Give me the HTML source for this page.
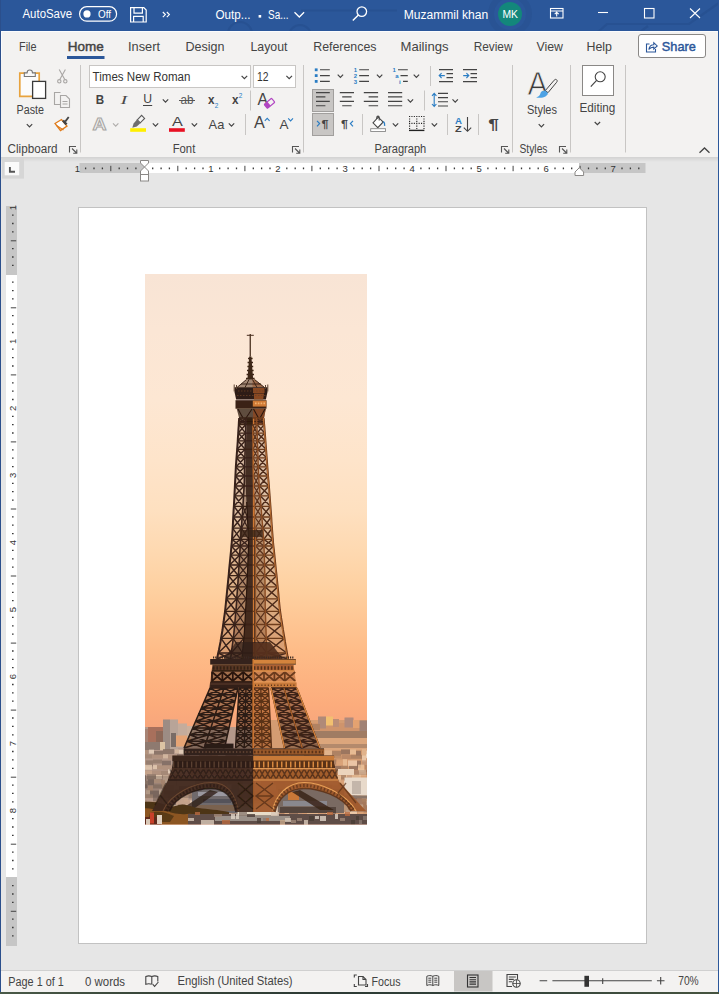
<!DOCTYPE html>
<html lang="en">
<head>
<meta charset="utf-8">
<title>Output - Word</title>
<style>
html,body{margin:0;padding:0;}
body{width:719px;height:994px;overflow:hidden;position:relative;background:#e6e6e6;font-family:"Liberation Sans",sans-serif;}
.abs{position:absolute;}
#titlebar{left:0;top:0;width:719px;height:31px;background:#2b579a;}
#tabs{left:1px;top:31px;width:717px;height:29px;background:#f3f2f1;border-top:1px solid #fbfcfd;border-left:1px solid #f9fbfd;box-sizing:border-box;}
#ribbon{left:1px;top:60px;width:717px;height:97px;background:#f3f2f1;}
#ribshadow{left:1px;top:157px;width:717px;height:5px;background:linear-gradient(#d2d2d2,#e6e6e6);}
#docarea{left:1px;top:162px;width:717px;height:808px;background:#e6e6e6;}
#page{left:78px;top:207px;width:569px;height:737px;background:#fff;border:1px solid #c2c2c2;box-sizing:border-box;}
#status{left:1px;top:970px;width:717px;height:21.5px;background:#f3f2f1;border-top:1px solid #d0d0d0;box-sizing:border-box;}
#bottomstrip{left:0;top:991.5px;width:719px;height:2.5px;background:linear-gradient(90deg,#4a5a48,#39473a 20%,#2c3a34 45%,#34443c 70%,#46543f);}
#lborder{left:0;top:0;width:1px;height:992px;background:#2b4f8c;}
#rborder{left:718px;top:0;width:1px;height:992px;background:#2b579a;}
svg{position:absolute;left:0;top:0;}
text{font-family:"Liberation Sans",sans-serif;}
</style>
</head>
<body>
<div id="titlebar" class="abs"></div>
<div id="tabs" class="abs"></div>
<div id="ribbon" class="abs"></div>
<div id="ribshadow" class="abs"></div>
<div id="docarea" class="abs"></div>
<div id="page" class="abs"></div>
<div id="status" class="abs"></div>
<div id="bottomstrip" class="abs"></div>
<div id="lborder" class="abs"></div>
<div id="rborder" class="abs"></div>

<!-- TITLEBAR + TABS -->
<svg id="s-title" width="719" height="62" viewBox="0 0 719 62">
<clipPath id="tbc"><rect x="1" y="0" width="717" height="30.7"/></clipPath>
<g fill="none" stroke="#244c8a" stroke-opacity=".5" stroke-width="2.2" clip-path="url(#tbc)">
<circle cx="240" cy="34" r="12"/><circle cx="300" cy="36" r="11"/>
<path d="M301 10.500h96"/>
<circle cx="510" cy="14" r="19" stroke-width="6" stroke-opacity=".35"/>
<path d="M598 32l9-8h82l30-21M640 32l8-6"/>
</g>
<g fill="#fff" font-size="12.5">
<text x="22.5" y="18" textLength="49.5" lengthAdjust="spacingAndGlyphs">AutoSave</text>
<text x="98" y="17.6" font-size="11" textLength="13" lengthAdjust="spacingAndGlyphs">Off</text>
<text x="215.5" y="19" textLength="35" lengthAdjust="spacingAndGlyphs">Outp...</text>
<text x="268" y="19" textLength="20.5" lengthAdjust="spacingAndGlyphs">Sa...</text>
<text x="403.7" y="19" textLength="84.5" lengthAdjust="spacingAndGlyphs">Muzammil khan</text>
</g>
<!-- toggle -->
<rect x="79.6" y="6.6" width="37" height="14.6" rx="7.3" fill="none" stroke="#fff" stroke-width="1.2"/>
<circle cx="87" cy="13.9" r="3.6" fill="#fff"/>
<!-- save icon -->
<g fill="none" stroke="#fff" stroke-width="1.2">
<path d="M130.6 7.6h13.2l2.4 2.4v12h-15.6z"/>
<path d="M134 7.6v5.6h8.4V7.6"/>
<path d="M133.6 22v-5.6h9.6V22"/>
</g>
<!-- >> -->
<path d="M162.8 12l2.6 2.6-2.6 2.6M166.8 12l2.6 2.6-2.6 2.6" fill="none" stroke="#fff" stroke-width="1.1"/>
<rect x="258.6" y="15" width="2.6" height="2.6" fill="#fff"/>
<path d="M294.5 12.2l4.8 4.8 4.8-4.8" fill="none" stroke="#fff" stroke-width="1.3"/>
<!-- search -->
<circle cx="361.8" cy="11.6" r="4.8" fill="none" stroke="#fff" stroke-width="1.3"/>
<path d="M358.4 15l-5.6 5.6" stroke="#fff" stroke-width="1.4"/>
<!-- avatar -->
<circle cx="510" cy="14" r="12" fill="#13877b"/>
<text x="502.5" y="18" font-size="11.5" fill="#fff" textLength="15.5" lengthAdjust="spacingAndGlyphs">MK</text>
<!-- ribbon display -->
<g fill="none" stroke="#fff" stroke-width="1.1">
<rect x="550.5" y="8.5" width="12.5" height="9.5"/>
<path d="M550.5 11h12.5M556.7 16.6v-4M554.7 14.2l2-2 2 2"/>
</g>
<path d="M598 12.5h10" stroke="#fff" stroke-width="1.1"/>
<rect x="644.5" y="8.5" width="9.5" height="9.5" fill="none" stroke="#fff" stroke-width="1.1"/>
<path d="M690 8.5l10 9.5M700 8.5l-10 9.5" stroke="#fff" stroke-width="1.1"/>
<!-- tabs -->
<g fill="#444" font-size="12.8">
<text x="19" y="50.8" textLength="17.5" lengthAdjust="spacingAndGlyphs">File</text>
<text x="67.8" y="50.8" fill="#444" stroke="#444" stroke-width=".45" textLength="36" lengthAdjust="spacingAndGlyphs">Home</text>
<text x="128" y="50.8" textLength="32" lengthAdjust="spacingAndGlyphs">Insert</text>
<text x="185.5" y="50.8" textLength="39" lengthAdjust="spacingAndGlyphs">Design</text>
<text x="250.5" y="50.8" textLength="37" lengthAdjust="spacingAndGlyphs">Layout</text>
<text x="313.2" y="50.8" textLength="63.3" lengthAdjust="spacingAndGlyphs">References</text>
<text x="400.5" y="50.8" textLength="48" lengthAdjust="spacingAndGlyphs">Mailings</text>
<text x="473.7" y="50.8" textLength="38.8" lengthAdjust="spacingAndGlyphs">Review</text>
<text x="536.5" y="50.8" textLength="26.5" lengthAdjust="spacingAndGlyphs">View</text>
<text x="586.5" y="50.8" textLength="25.5" lengthAdjust="spacingAndGlyphs">Help</text>
</g>
<rect x="67" y="56" width="37.5" height="3" fill="#2b579a"/>
<!-- share -->
<rect x="638.5" y="34.5" width="67" height="23" rx="2.5" fill="#fff" stroke="#8a8886" stroke-width="1"/>
<text x="661.8" y="50.8" font-size="12.8" fill="#2b579a" stroke="#2b579a" stroke-width=".45" textLength="34" lengthAdjust="spacingAndGlyphs">Share</text>
<g fill="none" stroke="#2b579a" stroke-width="1.1">
<path d="M649.5 44h-3v8h9v-3"/>
<path d="M648.8 49.5c.6-3.2 2.6-4.8 5-4.8v-2l3.4 3.2-3.4 3.2v-2c-2 0-3.6.6-5 2.4z"/>
</g>
</svg>

<svg id="s-ribbon" width="719" height="162" viewBox="0 0 719 162">
<!-- group separators -->
<g stroke="#c8c6c4" stroke-width="1">
<path d="M80.5 65v87.5M303.5 65v87.5M512.5 65v87.5M570.5 65v87.5M625.5 65v87.5"/>
<path d="M250.5 90.5v20M245.5 114v21M424.5 90.5v20M430.5 66v20M362.5 114v21M447.5 114v21M478.5 114v21"/>
</g>
<!-- group labels -->
<g fill="#444" font-size="12">
<text x="7.6" y="152.6" textLength="50" lengthAdjust="spacingAndGlyphs">Clipboard</text>
<text x="172.7" y="152.6" textLength="22.6" lengthAdjust="spacingAndGlyphs">Font</text>
<text x="374.5" y="152.6" textLength="51.7" lengthAdjust="spacingAndGlyphs">Paragraph</text>
<text x="519.5" y="152.6" textLength="28" lengthAdjust="spacingAndGlyphs">Styles</text>
</g>
<!-- dialog launchers -->
<g fill="none" stroke="#555" stroke-width="1.100">
<path d="M69.5 152.5v-6h6.5M72 148.5l4.5 4.5M76.8 149.6v3.6h-3.6"/>
<path d="M292.5 152.5v-6h6.5M295 148.5l4.500 4.500M299.800 149.600v3.600h-3.600"/>
<path d="M501.500 152.500v-6h6.500M504 148.500l4.500 4.500M508.800 149.600v3.600h-3.600"/>
<path d="M559.500 152.500v-6h6.500M562 148.500l4.500 4.500M566.800 149.600v3.600h-3.600"/>
</g>
<!-- collapse caret -->
<path d="M699.500 152.800l5-4.800 5 4.800" fill="none" stroke="#444" stroke-width="1.3"/>

<!-- CLIPBOARD: paste -->
<g fill="none">
<rect x="19.300" y="73.200" width="20.400" height="23.400" fill="#fbfbfb"/>
<path d="M25 73.200h-5.200v23.200h12.400" stroke="#e8a33e" stroke-width="1.700"/>
<path d="M34.500 73.200h4.700v8" stroke="#e8a33e" stroke-width="1.700"/>
<path d="M24.300 76.500v-3.600h2.800c0-3.800 5.400-3.800 5.400 0h2.800v3.600z" fill="#f8f8f8" stroke="#777" stroke-width="1.100"/>
<rect x="32.600" y="81.400" width="13" height="17" fill="#fff" stroke="#3a3a3a" stroke-width="1.300"/>
</g>
<text x="16.600" y="113.500" font-size="12.500" fill="#444" textLength="27.400" lengthAdjust="spacingAndGlyphs">Paste</text>
<path d="M26.800 124.200l2.700 2.700 2.700-2.700" fill="none" stroke="#444" stroke-width="1.200"/>
<!-- scissors (disabled grey) -->
<g fill="none" stroke="#a8a6a4" stroke-width="1.100">
<path d="M59.200 69.500l5.600 10M65.400 69.500l-5.600 10"/>
<circle cx="59.300" cy="81.300" r="1.700"/><circle cx="65.300" cy="81.300" r="1.700"/>
</g>
<!-- copy (disabled) -->
<g fill="none" stroke="#a8a6a4" stroke-width="1.100">
<path d="M60.500 104.500h-6v-12h6"/>
<path d="M60.500 95.500h5.500l3.500 3.500v8.500h-9z"/>
<path d="M62.500 101.500h5M62.500 104h5"/>
</g>
<!-- format painter -->
<g>
<path d="M55 123.500l6.500-4 5.500 6.500-6.500 4.500z" fill="#fff" stroke="#e07b1a" stroke-width="1.300"/>
<path d="M56.500 125.500l7 4.500" stroke="#e07b1a" stroke-width="1.100"/>
<path d="M63 120.500l3.500 4" stroke="#444" stroke-width="2.600"/>
<path d="M65.200 121.600l3.500-4.600" stroke="#444" stroke-width="1.800"/>
</g>

<!-- FONT boxes -->
<rect x="89.500" y="65.500" width="161" height="22" fill="#fff" stroke="#c8c6c4"/>
<rect x="253.500" y="65.500" width="42" height="22" fill="#fff" stroke="#c8c6c4"/>
<text x="92.600" y="81" font-size="12.500" fill="#333" textLength="97.800" lengthAdjust="spacingAndGlyphs">Times New Roman</text>
<text x="256.900" y="81" font-size="12.500" fill="#333" textLength="11.500" lengthAdjust="spacingAndGlyphs">12</text>
<g fill="none" stroke="#444" stroke-width="1.200">
<path d="M241.600 75.800l2.800 2.800 2.800-2.800"/>
<path d="M286.400 75.800l2.800 2.800 2.800-2.800"/>
<!-- small chevrons -->
<path d="M162.800 99.400l2.700 2.700 2.700-2.700"/>
<path d="M152.800 123.400l2.700 2.700 2.700-2.700"/>
<path d="M191.700 123.400l2.700 2.700 2.700-2.700"/>
<path d="M228.800 123.400l2.700 2.700 2.700-2.700"/>
</g>
<path d="M113 123.400l2.700 2.700 2.700-2.700" fill="none" stroke="#b0aeac" stroke-width="1.200"/>
<!-- B I U ab x2 x2 -->
<text x="95.800" y="103.700" font-size="12.600" font-weight="bold" fill="#444" textLength="8.400" lengthAdjust="spacingAndGlyphs">B</text>
<text x="120.600" y="103.700" font-size="13.500" font-style="italic" fill="#4a4a4a" style="font-family:'Liberation Serif',serif" textLength="6.800" lengthAdjust="spacingAndGlyphs">I</text>
<text x="143.200" y="103.400" font-size="12.500" fill="#444" textLength="8.800" lengthAdjust="spacingAndGlyphs">U</text>
<path d="M143 105.500h9.200" stroke="#444" stroke-width="1"/>
<text x="180.500" y="104" font-size="12.500" fill="#555" textLength="13" lengthAdjust="spacingAndGlyphs">ab</text>
<path d="M179 100.500h16" stroke="#555" stroke-width="1"/>
<text x="208" y="104" font-size="12.500" font-weight="bold" fill="#444" textLength="6.500" lengthAdjust="spacingAndGlyphs">x</text>
<text x="214.700" y="107.700" font-size="7" fill="#2a7dc4" textLength="3.600" lengthAdjust="spacingAndGlyphs">2</text>
<text x="232" y="104" font-size="12.500" font-weight="bold" fill="#444" textLength="6.500" lengthAdjust="spacingAndGlyphs">x</text>
<text x="238.800" y="97.600" font-size="7" fill="#2a7dc4" textLength="3.600" lengthAdjust="spacingAndGlyphs">2</text>
<!-- clear formatting -->
<text x="257.500" y="104.600" font-size="16.500" fill="#444" textLength="10.500" lengthAdjust="spacingAndGlyphs">A</text>
<g transform="rotate(-40 269.500 103.300)"><rect x="264.700" y="100.700" width="9.600" height="5.200" rx=".8" fill="#f3f2f1" stroke="#b146c2" stroke-width="1.200"/><rect x="264.700" y="100.700" width="4.200" height="5.200" fill="#b146c2"/></g>
<!-- text effects A (outlined grey) -->
<text x="92.600" y="129.600" font-size="17" font-weight="bold" fill="#f3f2f1" stroke="#a8a6a4" stroke-width="1" textLength="14" lengthAdjust="spacingAndGlyphs">A</text>
<!-- highlighter -->
<path d="M137.300 119.800L141.600 115.400L144.600 118.400L140.300 122.800Z" fill="#f6f6f6" stroke="#5a5a5a" stroke-width="1.100"/>
<path d="M137 119.600L140.600 123L136.800 126.600L132.300 127.800L133.600 123.400Z" fill="#6e6e6e"/>
<rect x="130.200" y="128.200" width="15.800" height="3.600" fill="#ffef00"/>
<!-- font color -->
<text x="172" y="126.400" font-size="13.500" fill="#444" textLength="10.800" lengthAdjust="spacingAndGlyphs">A</text>
<rect x="169" y="128.200" width="15.800" height="3.600" fill="#e81123"/>
<!-- Aa -->
<text x="208.600" y="128.500" font-size="12.800" fill="#444" textLength="15.700" lengthAdjust="spacingAndGlyphs">Aa</text>
<!-- grow / shrink -->
<text x="254" y="128.300" font-size="16" fill="#444" textLength="10.800" lengthAdjust="spacingAndGlyphs">A</text>
<path d="M264.800 120.800l2.400-2.500 2.400 2.500" fill="none" stroke="#2a7dc4" stroke-width="1.100"/>
<text x="279.500" y="128.500" font-size="12.800" fill="#444" textLength="9" lengthAdjust="spacingAndGlyphs">A</text>
<path d="M288.200 118.400l2.400 2.500 2.400-2.500" fill="none" stroke="#2a7dc4" stroke-width="1.100"/>
<!-- PARAGRAPH row1: bullets -->
<g fill="#2a7dc4">
<rect x="314.800" y="68.400" width="2.800" height="2.800"/><rect x="314.800" y="74.200" width="2.800" height="2.800"/><rect x="314.800" y="80" width="2.800" height="2.800"/>
</g>
<g stroke="#444" stroke-width="1.100" fill="none">
<path d="M320 69.800h9.800M320 75.600h9.800M320 81.400h9.800"/>
<path d="M359.200 69.800h9.800M359.200 75.600h9.800M359.200 81.400h9.800"/>
<path d="M398 69.800h9.800M400.500 75.600h7.300M403 81.400h4.800"/>
</g>
<g fill="#2a7dc4" font-size="6" font-weight="bold">
<text x="353.800" y="72">1</text><text x="353.800" y="77.900">2</text><text x="353.800" y="83.800">3</text>
<text x="392.600" y="72">1</text><text x="395.300" y="78">a</text><text x="399" y="84">i</text>
</g>
<g fill="none" stroke="#444" stroke-width="1.200">
<path d="M337.700 74.600l2.700 2.700 2.700-2.700"/>
<path d="M376.900 74.600l2.700 2.700 2.700-2.700"/>
<path d="M413.700 74.600l2.700 2.700 2.700-2.700"/>
<path d="M407.700 99.400l2.700 2.700 2.700-2.700"/>
<path d="M452.500 99.400l2.700 2.700 2.700-2.700"/>
<path d="M392.800 123.400l2.700 2.700 2.700-2.700"/>
<path d="M431.700 123.400l2.700 2.700 2.700-2.700"/>
</g>
<!-- decrease / increase indent -->
<g stroke="#444" stroke-width="1.100" fill="none">
<path d="M439 69.600h14M446.500 73.600h6.500M446.500 77.600h6.500M439 81.600h14"/>
<path d="M463 69.600h14M470.500 73.600h6.500M470.500 77.600h6.500M463 81.600h14"/>
</g>
<g stroke="#2a7dc4" stroke-width="1.100" fill="none">
<path d="M444.800 75.600h-5.600M441.600 73.200l-2.400 2.400 2.400 2.400"/>
<path d="M463.200 75.600h5.600M466.400 73.200l2.400 2.400-2.400 2.400"/>
</g>
<!-- row2: align -->
<rect x="312.500" y="89.500" width="21" height="22" fill="#c8c6c4" stroke="#a19f9d"/>
<g stroke="#444" stroke-width="1.100" fill="none">
<path d="M316 92.600h13.800M316 96.900h9.400M316 101.400h13.800M316 105.700h9.400"/>
<path d="M339.800 92.600h14.200M342.200 96.900h9.400M339.800 101.400h14.200M342.200 105.700h9.400"/>
<path d="M363.800 92.600h14.300M368.600 96.900h9.500M363.800 101.400h14.300M368.600 105.700h9.500"/>
<path d="M388 92.600h14.200M388 96.900h14.200M388 101.400h14.200M388 105.700h14.200"/>
<!-- line spacing lines -->
<path d="M438 93.400h10M438 97.600h10M438 101.800h10M438 106h10"/>
</g>
<g stroke="#2a7dc4" stroke-width="1.100" fill="none">
<path d="M434.200 93.600v12.600M432 95.800l2.200-2.400 2.200 2.400M432 104l2.200 2.400 2.200-2.400"/>
</g>
<!-- row3: LTR / RTL -->
<rect x="312.500" y="113.500" width="21" height="22" fill="#c8c6c4" stroke="#a19f9d"/>
<path d="M317 120.800l2.600 2.800-2.600 2.800" fill="none" stroke="#2a7dc4" stroke-width="1.200"/>
<text x="321.600" y="128.400" font-size="11.500" font-weight="bold" fill="#444" textLength="7" lengthAdjust="spacingAndGlyphs">¶</text>
<text x="341" y="128.400" font-size="11.500" font-weight="bold" fill="#444" textLength="7" lengthAdjust="spacingAndGlyphs">¶</text>
<path d="M353 120.800l-2.600 2.800 2.600 2.800" fill="none" stroke="#2a7dc4" stroke-width="1.200"/>
<!-- shading bucket -->
<g fill="none" stroke="#444" stroke-width="1.100">
<path d="M373 122.800l5.200-5.600 5 4.800-5.400 5.600z" fill="#fff"/>
<path d="M376.800 119v-1.600c0-1.700 2.400-1.700 2.400 0v3"/>
</g>
<path d="M383.400 121.400c1.400 1.400 1.600 2.800 1.200 4.400" fill="none" stroke="#2a7dc4" stroke-width="1.400"/>
<rect x="370.700" y="128.700" width="14.800" height="2.800" fill="#fff" stroke="#888" stroke-width=".9"/>
<!-- borders -->
<g stroke="#222" stroke-width="1.100" stroke-dasharray="1.100 1.300" fill="none">
<path d="M409 116.500h15.600M409 123.400h15.600M409.600 116v14M416.800 116v14M424 116v14"/>
</g>
<path d="M409 130.400h15.400" stroke="#222" stroke-width="1.400"/>
<!-- sort -->
<text x="455" y="123.800" font-size="9.500" font-weight="bold" fill="#2a7dc4" textLength="7" lengthAdjust="spacingAndGlyphs">A</text>
<text x="455" y="132.200" font-size="9.500" font-weight="bold" fill="#444" textLength="6.600" lengthAdjust="spacingAndGlyphs">Z</text>
<path d="M467.500 117v14.200M463.800 127.600l3.700 3.700 3.700-3.700" fill="none" stroke="#444" stroke-width="1.100"/>
<!-- pilcrow -->
<text x="488.300" y="129" font-size="14" font-weight="bold" fill="#444" textLength="10.600" lengthAdjust="spacingAndGlyphs">¶</text>
<!-- STYLES -->
<text x="527.600" y="95.200" font-size="33.500" fill="#3a3a3a" stroke="#f3f2f1" stroke-width=".8" textLength="20.400" lengthAdjust="spacingAndGlyphs">A</text>
<path d="M556.400 79.600c1 .7 1 1.600.2 2.700l-8.600 10.400-2.600-2.200 8.800-10.300c.8-.9 1.500-1 2.200-.6z" fill="#f3f2f1" stroke="#444" stroke-width="1"/>
<path d="M545.200 90.600l2.700 2.300c-.6 3.400-4.600 5.800-11.800 4.600 2.600-.8 3.600-1.700 4.200-3.700.6-2.300 2.600-3.500 4.900-3.200z" fill="#4da2e4"/>
<text x="527" y="113.600" font-size="12.500" fill="#444" textLength="30" lengthAdjust="spacingAndGlyphs">Styles</text>
<path d="M538.700 124.200l2.700 2.700 2.700-2.700" fill="none" stroke="#444" stroke-width="1.200"/>
<!-- EDITING -->
<rect x="582.500" y="65.500" width="31" height="30" fill="#fff" stroke="#8a8886"/>
<circle cx="600.200" cy="76.800" r="5" fill="none" stroke="#444" stroke-width="1.100"/>
<path d="M596.600 80.400l-5.800 6.200" stroke="#444" stroke-width="1.200"/>
<text x="579.500" y="112" font-size="12.500" fill="#444" textLength="35.800" lengthAdjust="spacingAndGlyphs">Editing</text>
<path d="M594.700 122l2.700 2.700 2.700-2.700" fill="none" stroke="#444" stroke-width="1.200"/>

</svg>

<!--RIBBON_END-->
<svg id="s-ruler" width="719" height="994" viewBox="0 0 719 994" style="pointer-events:none">
<rect x="2" y="158" width="22" height="20.600" fill="#d6d6d6"/><rect x="4.700" y="162" width="14.500" height="13.300" fill="#fafafa"/>
<path d="M9.900 167v4.800h5.100" fill="none" stroke="#555" stroke-width="1.900"/>
<rect x="79.500" y="163" width="566" height="10" fill="#c6c6c6"/>
<rect x="144.300" y="163" width="434.700" height="10" fill="#fff"/>
<path d="M85.6 167.600v1.600M94.0 167.600v1.600M102.4 167.600v1.600M119.2 167.600v1.600M127.5 167.600v1.600M135.9 167.600v1.600M152.7 167.600v1.600M161.1 167.600v1.600M169.4 167.600v1.600M186.2 167.600v1.600M194.6 167.600v1.600M203.0 167.600v1.600M219.7 167.600v1.600M228.1 167.600v1.600M236.5 167.600v1.600M253.3 167.600v1.600M261.6 167.600v1.600M270.0 167.600v1.600M286.8 167.600v1.600M295.2 167.600v1.600M303.5 167.600v1.600M320.3 167.600v1.600M328.7 167.600v1.600M337.1 167.600v1.600M353.8 167.600v1.600M362.2 167.600v1.600M370.6 167.600v1.600M387.4 167.600v1.600M395.7 167.600v1.600M404.1 167.600v1.600M420.9 167.600v1.600M429.3 167.600v1.600M437.6 167.600v1.600M454.4 167.600v1.600M462.8 167.600v1.600M471.2 167.600v1.600M487.9 167.600v1.600M496.3 167.600v1.600M504.7 167.600v1.600M521.5 167.600v1.600M529.8 167.600v1.600M538.2 167.600v1.600M555.0 167.600v1.600M563.4 167.600v1.600M571.7 167.600v1.600M588.5 167.600v1.600M596.9 167.600v1.600M605.3 167.600v1.600M622.0 167.600v1.600M630.4 167.600v1.600M638.8 167.600v1.600" stroke="#3a3a3a" stroke-width="1.300" fill="none"/>
<path d="M110.8 165.800v5.400M177.8 165.800v5.400M244.9 165.800v5.400M311.9 165.800v5.400M379.0 165.800v5.400M446.0 165.800v5.400M513.1 165.800v5.400M580.1 165.800v5.400" stroke="#444" stroke-width="1" fill="none"/>
<g font-size="9.500" fill="#333" text-anchor="middle">
<text x="77.300" y="171.600">1</text>
<text x="211.0" y="171.600">1</text>
<text x="278.0" y="171.600">2</text>
<text x="345.1" y="171.600">3</text>
<text x="412.1" y="171.600">4</text>
<text x="479.2" y="171.600">5</text>
<text x="546.2" y="171.600">6</text>
<text x="613.2" y="171.600">7</text>
</g>
<g fill="#fff" stroke="#8a8886" stroke-width="1">
<path d="M140.500 160.500h8v2.500l-4 4-4-4z"/>
<path d="M140.500 174.500v-3.500l4-4 4 4v3.500z"/>
<rect x="140.500" y="174.500" width="8" height="6.500"/>
<path d="M575 175.500v-3.500l4.300-4.300 4.300 4.300v3.500z"/>
</g>
<rect x="6" y="206" width="11" height="740" fill="#c6c6c6"/>
<rect x="6" y="275" width="11" height="602" fill="#fff"/>
<path d="M12 215.1h1.600M12 223.5h1.600M12 231.9h1.600M12 248.7h1.600M12 257.0h1.600M12 265.4h1.600M12 282.2h1.600M12 290.6h1.600M12 298.9h1.600M12 315.7h1.600M12 324.1h1.600M12 332.5h1.600M12 349.2h1.600M12 357.6h1.600M12 366.0h1.600M12 382.8h1.600M12 391.1h1.600M12 399.5h1.600M12 416.3h1.600M12 424.7h1.600M12 433.0h1.600M12 449.8h1.600M12 458.2h1.600M12 466.6h1.600M12 483.3h1.600M12 491.7h1.600M12 500.1h1.600M12 516.9h1.600M12 525.2h1.600M12 533.6h1.600M12 550.4h1.600M12 558.8h1.600M12 567.1h1.600M12 583.9h1.600M12 592.3h1.600M12 600.7h1.600M12 617.4h1.600M12 625.8h1.600M12 634.2h1.600M12 651.0h1.600M12 659.3h1.600M12 667.7h1.600M12 684.5h1.600M12 692.9h1.600M12 701.2h1.600M12 718.0h1.600M12 726.4h1.600M12 734.8h1.600M12 751.5h1.600M12 759.9h1.600M12 768.3h1.600M12 785.1h1.600M12 793.4h1.600M12 801.8h1.600M12 818.6h1.600M12 827.0h1.600M12 835.3h1.600M12 852.1h1.600M12 860.5h1.600M12 868.9h1.600M12 885.6h1.600M12 894.0h1.600M12 902.4h1.600M12 919.2h1.600M12 927.5h1.600M12 935.9h1.600" stroke="#3a3a3a" stroke-width="1.300" fill="none"/>
<path d="M10.800 240.8h5.400M10.800 307.8h5.400M10.800 374.9h5.400M10.800 441.9h5.400M10.800 509.0h5.400M10.800 576.0h5.400M10.800 643.1h5.400M10.800 710.1h5.400M10.800 777.2h5.400M10.800 844.2h5.400M10.800 911.3h5.400" stroke="#444" stroke-width="1" fill="none"/>
<g font-size="9.500" fill="#333" text-anchor="middle">
<text transform="translate(16.200 207.600) rotate(-90)">1</text>
<text transform="translate(16.200 341.4) rotate(-90)">1</text>
<text transform="translate(16.200 408.4) rotate(-90)">2</text>
<text transform="translate(16.200 475.4) rotate(-90)">3</text>
<text transform="translate(16.200 542.5) rotate(-90)">4</text>
<text transform="translate(16.200 609.5) rotate(-90)">5</text>
<text transform="translate(16.200 676.6) rotate(-90)">6</text>
<text transform="translate(16.200 743.6) rotate(-90)">7</text>
<text transform="translate(16.200 810.7) rotate(-90)">8</text>
</g>
</svg>
<!--RULER_END-->
<!--PHOTO_START-->
<svg id="s-photo" width="719" height="994" viewBox="0 0 719 994" style="pointer-events:none">
<defs>
<linearGradient id="sky" x1="0" y1="274" x2="0" y2="740" gradientUnits="userSpaceOnUse">
<stop offset="0.0000" stop-color="#f8e4d5"/>
<stop offset="0.1202" stop-color="#fbe6d5"/>
<stop offset="0.2704" stop-color="#fde7d3"/>
<stop offset="0.3991" stop-color="#fee4ca"/>
<stop offset="0.5064" stop-color="#fee0c0"/>
<stop offset="0.5923" stop-color="#fed9b1"/>
<stop offset="0.6781" stop-color="#fed0a0"/>
<stop offset="0.7425" stop-color="#fec694"/>
<stop offset="0.8069" stop-color="#febc88"/>
<stop offset="0.8712" stop-color="#fdb381"/>
<stop offset="0.9249" stop-color="#fcac7c"/>
<stop offset="1.0000" stop-color="#f4a27c"/>
</linearGradient>
<linearGradient id="tw" x1="205" y1="0" x2="300" y2="0" gradientUnits="userSpaceOnUse">
<stop offset="0" stop-color="#3a2216"/><stop offset=".46" stop-color="#3e2517"/><stop offset=".54" stop-color="#8a4520"/><stop offset="1" stop-color="#a35626"/></linearGradient>
<linearGradient id="lr" x1="160" y1="0" x2="345" y2="0" gradientUnits="userSpaceOnUse">
<stop offset="0" stop-color="#4a3022"/><stop offset=".495" stop-color="#3a241a"/><stop offset=".505" stop-color="#b0642e"/><stop offset="1" stop-color="#c07436"/></linearGradient>
<clipPath id="pc"><rect x="145" y="274" width="222" height="550.600"/></clipPath>
<filter id="bl" filterUnits="userSpaceOnUse" x="120" y="260" width="280" height="590"><feGaussianBlur stdDeviation="0.45"/></filter>
<filter id="bl2" filterUnits="userSpaceOnUse" x="120" y="260" width="280" height="590"><feGaussianBlur stdDeviation="0.6"/></filter>
</defs>
<g clip-path="url(#pc)">
<rect x="135" y="264" width="242" height="571" fill="url(#sky)"/>
<g filter="url(#bl2)">
<rect x="135.0" y="727.0" width="120.0" height="110.0" fill="#b4988a"/>
<rect x="255.0" y="720.0" width="122.0" height="112.0" fill="#d49c72"/>
<rect x="135.0" y="729.0" width="14.0" height="14.0" fill="#a88474"/>
<rect x="148.0" y="727.0" width="15.0" height="18.0" fill="#a8705c"/>
<rect x="163.0" y="719.5" width="7.0" height="30.0" fill="#9c8c84"/>
<rect x="170.0" y="719.5" width="8.0" height="30.0" fill="#b8a498"/>
<rect x="156.0" y="731.0" width="7.0" height="12.0" fill="#8c6858"/>
<rect x="178.0" y="723.5" width="9.0" height="24.0" fill="#c4ac9c"/>
<rect x="171.0" y="733.0" width="5.0" height="14.0" fill="#7a6c66"/>
<rect x="176.0" y="735.5" width="15.0" height="11.0" fill="#e6a474"/>
<rect x="187.0" y="726.0" width="9.0" height="12.0" fill="#cbb09c"/>
<rect x="194.0" y="725.0" width="9.0" height="10.0" fill="#c0a694"/>
<rect x="135.0" y="742.0" width="28.0" height="8.0" fill="#8e7a70"/>
<rect x="160.0" y="742.0" width="5.0" height="8.0" fill="#dcc4a4"/>
<rect x="296.0" y="723.0" width="81.0" height="9.0" fill="#cf946c"/>
<rect x="318.0" y="716.5" width="8.0" height="12.0" fill="#b08a78"/>
<rect x="326.0" y="716.5" width="7.0" height="9.0" fill="#f2c070"/>
<rect x="333.0" y="719.0" width="6.0" height="8.0" fill="#bc8e76"/>
<rect x="344.5" y="717.5" width="9.0" height="10.0" fill="#b08a7c"/>
<rect x="353.0" y="720.0" width="7.0" height="8.0" fill="#e4a270"/>
<rect x="359.5" y="720.5" width="9.0" height="14.0" fill="#a08274"/>
<rect x="308.0" y="724.0" width="12.0" height="6.0" fill="#b08262"/>
<rect x="290.0" y="731.0" width="90.0" height="7.0" fill="#a07c64"/>
<rect x="290.0" y="738.0" width="90.0" height="12.0" fill="#dca67c"/>
<rect x="300.0" y="744.0" width="70.0" height="4.0" fill="#b48a6c"/>
<rect x="135.0" y="750.0" width="7.0" height="7.0" fill="#f0dcc6" fill-opacity="0.72"/>
<rect x="143.0" y="750.0" width="5.0" height="5.0" fill="#b09078" fill-opacity="0.72"/>
<rect x="149.0" y="749.6" width="5.0" height="4.0" fill="#f0dcc6" fill-opacity="0.72"/>
<rect x="154.0" y="751.0" width="9.0" height="4.0" fill="#7e6a5e" fill-opacity="0.72"/>
<rect x="163.0" y="749.0" width="11.0" height="5.0" fill="#7e6a5e" fill-opacity="0.72"/>
<rect x="175.0" y="749.4" width="4.0" height="4.0" fill="#dcc0a6" fill-opacity="0.72"/>
<rect x="179.0" y="749.7" width="9.0" height="4.0" fill="#f0dcc6" fill-opacity="0.72"/>
<rect x="189.0" y="749.6" width="5.0" height="5.0" fill="#c49a7a" fill-opacity="0.72"/>
<rect x="194.0" y="750.3" width="11.0" height="4.0" fill="#f0dcc6" fill-opacity="0.72"/>
<rect x="205.0" y="749.6" width="9.0" height="4.0" fill="#a08470" fill-opacity="0.72"/>
<rect x="214.0" y="749.1" width="9.0" height="6.0" fill="#dcc0a6" fill-opacity="0.72"/>
<rect x="223.0" y="749.8" width="7.0" height="4.0" fill="#a08470" fill-opacity="0.72"/>
<rect x="230.0" y="749.4" width="11.0" height="4.0" fill="#ecd2b8" fill-opacity="0.72"/>
<rect x="241.0" y="749.8" width="7.0" height="7.0" fill="#74625a" fill-opacity="0.72"/>
<rect x="249.0" y="749.5" width="11.0" height="5.0" fill="#c49a7a" fill-opacity="0.72"/>
<rect x="260.0" y="750.9" width="6.0" height="6.0" fill="#e6bc94" fill-opacity="0.72"/>
<rect x="266.0" y="749.0" width="5.0" height="5.0" fill="#c4906a" fill-opacity="0.72"/>
<rect x="271.0" y="749.4" width="7.0" height="5.0" fill="#c0967a" fill-opacity="0.72"/>
<rect x="279.0" y="750.3" width="5.0" height="5.0" fill="#866858" fill-opacity="0.72"/>
<rect x="284.0" y="749.0" width="7.0" height="7.0" fill="#f2d6b8" fill-opacity="0.72"/>
<rect x="292.0" y="749.4" width="6.0" height="4.0" fill="#f2d6b8" fill-opacity="0.72"/>
<rect x="299.0" y="751.0" width="11.0" height="4.0" fill="#e6bc94" fill-opacity="0.72"/>
<rect x="310.0" y="750.5" width="7.0" height="6.0" fill="#e6bc94" fill-opacity="0.72"/>
<rect x="317.0" y="749.1" width="6.0" height="7.0" fill="#c4906a" fill-opacity="0.72"/>
<rect x="323.0" y="750.2" width="9.0" height="5.0" fill="#e6bc94" fill-opacity="0.72"/>
<rect x="332.0" y="750.9" width="9.0" height="7.0" fill="#a0785e" fill-opacity="0.72"/>
<rect x="341.0" y="749.4" width="9.0" height="5.0" fill="#866858" fill-opacity="0.72"/>
<rect x="350.0" y="749.5" width="6.0" height="5.0" fill="#efc8a0" fill-opacity="0.72"/>
<rect x="356.0" y="750.8" width="5.0" height="5.0" fill="#866858" fill-opacity="0.72"/>
<rect x="362.0" y="749.2" width="4.0" height="7.0" fill="#e6bc94" fill-opacity="0.72"/>
<rect x="366.0" y="750.5" width="9.0" height="6.0" fill="#f2d6b8" fill-opacity="0.72"/>
<rect x="375.0" y="750.0" width="6.0" height="7.0" fill="#efc8a0" fill-opacity="0.72"/>
<rect x="135.0" y="754.5" width="5.0" height="4.0" fill="#8a7466" fill-opacity="0.72"/>
<rect x="141.0" y="754.4" width="11.0" height="4.0" fill="#a08470" fill-opacity="0.72"/>
<rect x="152.0" y="754.5" width="11.0" height="4.0" fill="#b0907c" fill-opacity="0.72"/>
<rect x="163.0" y="754.4" width="5.0" height="4.0" fill="#dcc0a6" fill-opacity="0.72"/>
<rect x="168.0" y="754.7" width="9.0" height="5.0" fill="#b0907c" fill-opacity="0.72"/>
<rect x="177.0" y="754.1" width="6.0" height="5.0" fill="#7e6a5e" fill-opacity="0.72"/>
<rect x="183.0" y="755.9" width="7.0" height="6.0" fill="#a08470" fill-opacity="0.72"/>
<rect x="190.0" y="754.1" width="9.0" height="4.0" fill="#f0dcc6" fill-opacity="0.72"/>
<rect x="199.0" y="754.2" width="6.0" height="5.0" fill="#b0907c" fill-opacity="0.72"/>
<rect x="206.0" y="755.6" width="6.0" height="4.0" fill="#8a7466" fill-opacity="0.72"/>
<rect x="212.0" y="754.9" width="6.0" height="4.0" fill="#c49a7a" fill-opacity="0.72"/>
<rect x="218.0" y="755.1" width="7.0" height="4.0" fill="#f0dcc6" fill-opacity="0.72"/>
<rect x="226.0" y="755.2" width="11.0" height="7.0" fill="#74625a" fill-opacity="0.72"/>
<rect x="238.0" y="755.3" width="4.0" height="4.0" fill="#b0907c" fill-opacity="0.72"/>
<rect x="242.0" y="755.9" width="7.0" height="6.0" fill="#74625a" fill-opacity="0.72"/>
<rect x="250.0" y="754.9" width="9.0" height="7.0" fill="#f6e6d4" fill-opacity="0.72"/>
<rect x="260.0" y="755.2" width="4.0" height="4.0" fill="#b08264" fill-opacity="0.72"/>
<rect x="264.0" y="755.0" width="4.0" height="5.0" fill="#c4906a" fill-opacity="0.72"/>
<rect x="269.0" y="755.8" width="11.0" height="7.0" fill="#b08264" fill-opacity="0.72"/>
<rect x="280.0" y="754.4" width="6.0" height="5.0" fill="#efc8a0" fill-opacity="0.72"/>
<rect x="286.0" y="755.8" width="6.0" height="7.0" fill="#f6e6d4" fill-opacity="0.72"/>
<rect x="292.0" y="755.3" width="7.0" height="6.0" fill="#f2d6b8" fill-opacity="0.72"/>
<rect x="299.0" y="755.2" width="5.0" height="7.0" fill="#f2d6b8" fill-opacity="0.72"/>
<rect x="304.0" y="755.0" width="5.0" height="5.0" fill="#a0785e" fill-opacity="0.72"/>
<rect x="309.0" y="755.6" width="11.0" height="4.0" fill="#b08264" fill-opacity="0.72"/>
<rect x="320.0" y="755.9" width="7.0" height="7.0" fill="#b08264" fill-opacity="0.72"/>
<rect x="327.0" y="755.4" width="7.0" height="7.0" fill="#dca67c" fill-opacity="0.72"/>
<rect x="335.0" y="755.7" width="7.0" height="6.0" fill="#c4906a" fill-opacity="0.72"/>
<rect x="342.0" y="755.1" width="9.0" height="4.0" fill="#b08264" fill-opacity="0.72"/>
<rect x="351.0" y="754.8" width="11.0" height="4.0" fill="#a0785e" fill-opacity="0.72"/>
<rect x="362.0" y="755.6" width="4.0" height="6.0" fill="#f2d6b8" fill-opacity="0.72"/>
<rect x="366.0" y="754.2" width="11.0" height="4.0" fill="#f6e6d4" fill-opacity="0.72"/>
<rect x="135.0" y="760.4" width="11.0" height="6.0" fill="#b0907c" fill-opacity="0.72"/>
<rect x="146.0" y="760.4" width="7.0" height="6.0" fill="#8a7466" fill-opacity="0.72"/>
<rect x="153.0" y="759.5" width="9.0" height="4.0" fill="#8a7466" fill-opacity="0.72"/>
<rect x="162.0" y="760.7" width="9.0" height="5.0" fill="#74625a" fill-opacity="0.72"/>
<rect x="172.0" y="760.9" width="5.0" height="4.0" fill="#74625a" fill-opacity="0.72"/>
<rect x="178.0" y="759.9" width="7.0" height="5.0" fill="#f0dcc6" fill-opacity="0.72"/>
<rect x="186.0" y="760.1" width="4.0" height="7.0" fill="#b09078" fill-opacity="0.72"/>
<rect x="191.0" y="760.3" width="6.0" height="7.0" fill="#caa68a" fill-opacity="0.72"/>
<rect x="197.0" y="759.5" width="4.0" height="4.0" fill="#ecd2b8" fill-opacity="0.72"/>
<rect x="201.0" y="761.0" width="4.0" height="6.0" fill="#b09078" fill-opacity="0.72"/>
<rect x="205.0" y="760.0" width="6.0" height="4.0" fill="#caa68a" fill-opacity="0.72"/>
<rect x="211.0" y="759.8" width="7.0" height="6.0" fill="#b09078" fill-opacity="0.72"/>
<rect x="218.0" y="760.6" width="7.0" height="4.0" fill="#ecd2b8" fill-opacity="0.72"/>
<rect x="225.0" y="760.1" width="7.0" height="4.0" fill="#8a7466" fill-opacity="0.72"/>
<rect x="233.0" y="761.0" width="5.0" height="7.0" fill="#8a7466" fill-opacity="0.72"/>
<rect x="239.0" y="760.2" width="9.0" height="7.0" fill="#f0dcc6" fill-opacity="0.72"/>
<rect x="249.0" y="760.1" width="4.0" height="5.0" fill="#f0dcc6" fill-opacity="0.72"/>
<rect x="253.0" y="760.0" width="11.0" height="5.0" fill="#c0967a" fill-opacity="0.72"/>
<rect x="265.0" y="760.9" width="6.0" height="6.0" fill="#866858" fill-opacity="0.72"/>
<rect x="272.0" y="760.9" width="5.0" height="6.0" fill="#a0785e" fill-opacity="0.72"/>
<rect x="278.0" y="759.8" width="6.0" height="7.0" fill="#f2d6b8" fill-opacity="0.72"/>
<rect x="284.0" y="759.8" width="9.0" height="4.0" fill="#efc8a0" fill-opacity="0.72"/>
<rect x="294.0" y="760.6" width="4.0" height="7.0" fill="#c0967a" fill-opacity="0.72"/>
<rect x="299.0" y="760.4" width="4.0" height="7.0" fill="#c4906a" fill-opacity="0.72"/>
<rect x="303.0" y="760.8" width="9.0" height="7.0" fill="#866858" fill-opacity="0.72"/>
<rect x="312.0" y="760.0" width="6.0" height="5.0" fill="#f6e6d4" fill-opacity="0.72"/>
<rect x="318.0" y="759.6" width="7.0" height="7.0" fill="#c0967a" fill-opacity="0.72"/>
<rect x="325.0" y="759.3" width="7.0" height="4.0" fill="#b08264" fill-opacity="0.72"/>
<rect x="332.0" y="759.5" width="4.0" height="5.0" fill="#a0785e" fill-opacity="0.72"/>
<rect x="337.0" y="759.5" width="6.0" height="6.0" fill="#dca67c" fill-opacity="0.72"/>
<rect x="343.0" y="759.2" width="4.0" height="7.0" fill="#efc8a0" fill-opacity="0.72"/>
<rect x="348.0" y="760.4" width="9.0" height="6.0" fill="#f2d6b8" fill-opacity="0.72"/>
<rect x="357.0" y="760.7" width="4.0" height="7.0" fill="#866858" fill-opacity="0.72"/>
<rect x="362.0" y="760.3" width="5.0" height="5.0" fill="#c0967a" fill-opacity="0.72"/>
<rect x="368.0" y="760.8" width="5.0" height="5.0" fill="#f2d6b8" fill-opacity="0.72"/>
<rect x="374.0" y="760.2" width="6.0" height="5.0" fill="#dca67c" fill-opacity="0.72"/>
<rect x="135.0" y="764.3" width="5.0" height="5.0" fill="#b0907c" fill-opacity="0.72"/>
<rect x="140.0" y="764.8" width="5.0" height="4.0" fill="#a08470" fill-opacity="0.72"/>
<rect x="145.0" y="764.8" width="7.0" height="5.0" fill="#ecd2b8" fill-opacity="0.72"/>
<rect x="153.0" y="765.1" width="4.0" height="4.0" fill="#ecd2b8" fill-opacity="0.72"/>
<rect x="157.0" y="765.3" width="6.0" height="4.0" fill="#b09078" fill-opacity="0.72"/>
<rect x="163.0" y="765.0" width="9.0" height="5.0" fill="#b0907c" fill-opacity="0.72"/>
<rect x="172.0" y="764.4" width="4.0" height="7.0" fill="#8a7466" fill-opacity="0.72"/>
<rect x="176.0" y="766.0" width="5.0" height="5.0" fill="#8a7466" fill-opacity="0.72"/>
<rect x="182.0" y="765.9" width="4.0" height="4.0" fill="#8a7466" fill-opacity="0.72"/>
<rect x="186.0" y="764.8" width="4.0" height="4.0" fill="#caa68a" fill-opacity="0.72"/>
<rect x="190.0" y="764.4" width="9.0" height="6.0" fill="#74625a" fill-opacity="0.72"/>
<rect x="199.0" y="764.4" width="4.0" height="4.0" fill="#ecd2b8" fill-opacity="0.72"/>
<rect x="203.0" y="765.8" width="6.0" height="6.0" fill="#74625a" fill-opacity="0.72"/>
<rect x="210.0" y="765.6" width="5.0" height="4.0" fill="#b09078" fill-opacity="0.72"/>
<rect x="215.0" y="765.2" width="4.0" height="7.0" fill="#7e6a5e" fill-opacity="0.72"/>
<rect x="220.0" y="764.6" width="9.0" height="6.0" fill="#a08470" fill-opacity="0.72"/>
<rect x="229.0" y="764.3" width="11.0" height="5.0" fill="#74625a" fill-opacity="0.72"/>
<rect x="240.0" y="765.5" width="9.0" height="6.0" fill="#74625a" fill-opacity="0.72"/>
<rect x="249.0" y="765.6" width="5.0" height="5.0" fill="#b0907c" fill-opacity="0.72"/>
<rect x="254.0" y="765.8" width="7.0" height="4.0" fill="#e6bc94" fill-opacity="0.72"/>
<rect x="262.0" y="764.5" width="9.0" height="4.0" fill="#f2d6b8" fill-opacity="0.72"/>
<rect x="272.0" y="765.3" width="6.0" height="6.0" fill="#f2d6b8" fill-opacity="0.72"/>
<rect x="279.0" y="765.0" width="5.0" height="4.0" fill="#866858" fill-opacity="0.72"/>
<rect x="284.0" y="765.5" width="11.0" height="5.0" fill="#c4906a" fill-opacity="0.72"/>
<rect x="296.0" y="764.2" width="4.0" height="4.0" fill="#efc8a0" fill-opacity="0.72"/>
<rect x="300.0" y="765.0" width="6.0" height="7.0" fill="#866858" fill-opacity="0.72"/>
<rect x="306.0" y="764.2" width="11.0" height="7.0" fill="#e6bc94" fill-opacity="0.72"/>
<rect x="317.0" y="765.1" width="6.0" height="6.0" fill="#c0967a" fill-opacity="0.72"/>
<rect x="323.0" y="765.6" width="9.0" height="4.0" fill="#f6e6d4" fill-opacity="0.72"/>
<rect x="332.0" y="765.9" width="9.0" height="4.0" fill="#866858" fill-opacity="0.72"/>
<rect x="341.0" y="765.7" width="7.0" height="7.0" fill="#a0785e" fill-opacity="0.72"/>
<rect x="349.0" y="765.9" width="9.0" height="4.0" fill="#866858" fill-opacity="0.72"/>
<rect x="358.0" y="764.6" width="6.0" height="7.0" fill="#efc8a0" fill-opacity="0.72"/>
<rect x="365.0" y="765.1" width="6.0" height="7.0" fill="#b08264" fill-opacity="0.72"/>
<rect x="371.0" y="764.0" width="11.0" height="6.0" fill="#e6bc94" fill-opacity="0.72"/>
<rect x="135.0" y="769.3" width="9.0" height="4.0" fill="#c49a7a" fill-opacity="0.72"/>
<rect x="145.0" y="770.5" width="7.0" height="4.0" fill="#caa68a" fill-opacity="0.72"/>
<rect x="152.0" y="770.6" width="9.0" height="6.0" fill="#b0907c" fill-opacity="0.72"/>
<rect x="161.0" y="770.9" width="7.0" height="7.0" fill="#a08470" fill-opacity="0.72"/>
<rect x="168.0" y="769.3" width="4.0" height="4.0" fill="#f0dcc6" fill-opacity="0.72"/>
<rect x="172.0" y="770.2" width="9.0" height="4.0" fill="#dcc0a6" fill-opacity="0.72"/>
<rect x="181.0" y="769.7" width="4.0" height="5.0" fill="#dcc0a6" fill-opacity="0.72"/>
<rect x="185.0" y="769.3" width="4.0" height="6.0" fill="#f0dcc6" fill-opacity="0.72"/>
<rect x="189.0" y="770.2" width="7.0" height="6.0" fill="#c49a7a" fill-opacity="0.72"/>
<rect x="196.0" y="770.5" width="6.0" height="5.0" fill="#a08470" fill-opacity="0.72"/>
<rect x="202.0" y="770.8" width="7.0" height="4.0" fill="#b09078" fill-opacity="0.72"/>
<rect x="210.0" y="769.5" width="9.0" height="6.0" fill="#a08470" fill-opacity="0.72"/>
<rect x="220.0" y="769.6" width="11.0" height="5.0" fill="#c49a7a" fill-opacity="0.72"/>
<rect x="231.0" y="771.0" width="5.0" height="5.0" fill="#b09078" fill-opacity="0.72"/>
<rect x="236.0" y="769.1" width="11.0" height="4.0" fill="#c49a7a" fill-opacity="0.72"/>
<rect x="247.0" y="770.2" width="6.0" height="7.0" fill="#dcc0a6" fill-opacity="0.72"/>
<rect x="253.0" y="770.5" width="5.0" height="6.0" fill="#c4906a" fill-opacity="0.72"/>
<rect x="259.0" y="770.0" width="5.0" height="5.0" fill="#dca67c" fill-opacity="0.72"/>
<rect x="264.0" y="770.0" width="5.0" height="6.0" fill="#dca67c" fill-opacity="0.72"/>
<rect x="269.0" y="770.6" width="4.0" height="4.0" fill="#f6e6d4" fill-opacity="0.72"/>
<rect x="274.0" y="770.5" width="5.0" height="7.0" fill="#866858" fill-opacity="0.72"/>
<rect x="279.0" y="770.3" width="5.0" height="6.0" fill="#a0785e" fill-opacity="0.72"/>
<rect x="285.0" y="770.5" width="6.0" height="6.0" fill="#c0967a" fill-opacity="0.72"/>
<rect x="291.0" y="769.2" width="7.0" height="6.0" fill="#efc8a0" fill-opacity="0.72"/>
<rect x="298.0" y="770.1" width="4.0" height="4.0" fill="#866858" fill-opacity="0.72"/>
<rect x="302.0" y="770.6" width="11.0" height="7.0" fill="#b08264" fill-opacity="0.72"/>
<rect x="313.0" y="770.8" width="4.0" height="6.0" fill="#f2d6b8" fill-opacity="0.72"/>
<rect x="318.0" y="770.4" width="4.0" height="6.0" fill="#f6e6d4" fill-opacity="0.72"/>
<rect x="323.0" y="769.4" width="6.0" height="6.0" fill="#a0785e" fill-opacity="0.72"/>
<rect x="330.0" y="770.8" width="11.0" height="6.0" fill="#dca67c" fill-opacity="0.72"/>
<rect x="341.0" y="770.2" width="11.0" height="7.0" fill="#efc8a0" fill-opacity="0.72"/>
<rect x="353.0" y="770.6" width="6.0" height="7.0" fill="#c0967a" fill-opacity="0.72"/>
<rect x="359.0" y="769.8" width="7.0" height="6.0" fill="#f2d6b8" fill-opacity="0.72"/>
<rect x="367.0" y="769.7" width="9.0" height="5.0" fill="#c4906a" fill-opacity="0.72"/>
<rect x="376.0" y="770.2" width="4.0" height="6.0" fill="#866858" fill-opacity="0.72"/>
<rect x="135.0" y="775.1" width="11.0" height="6.0" fill="#74625a" fill-opacity="0.72"/>
<rect x="147.0" y="774.2" width="9.0" height="5.0" fill="#8a7466" fill-opacity="0.72"/>
<rect x="156.0" y="775.0" width="6.0" height="4.0" fill="#ecd2b8" fill-opacity="0.72"/>
<rect x="163.0" y="775.3" width="5.0" height="6.0" fill="#dcc0a6" fill-opacity="0.72"/>
<rect x="168.0" y="774.2" width="4.0" height="6.0" fill="#b09078" fill-opacity="0.72"/>
<rect x="172.0" y="774.2" width="6.0" height="4.0" fill="#caa68a" fill-opacity="0.72"/>
<rect x="179.0" y="775.5" width="11.0" height="5.0" fill="#b0907c" fill-opacity="0.72"/>
<rect x="191.0" y="775.0" width="7.0" height="5.0" fill="#ecd2b8" fill-opacity="0.72"/>
<rect x="199.0" y="774.7" width="6.0" height="7.0" fill="#74625a" fill-opacity="0.72"/>
<rect x="205.0" y="775.0" width="11.0" height="5.0" fill="#f0dcc6" fill-opacity="0.72"/>
<rect x="217.0" y="775.5" width="4.0" height="4.0" fill="#74625a" fill-opacity="0.72"/>
<rect x="222.0" y="775.7" width="6.0" height="4.0" fill="#74625a" fill-opacity="0.72"/>
<rect x="228.0" y="774.7" width="9.0" height="4.0" fill="#b09078" fill-opacity="0.72"/>
<rect x="237.0" y="775.8" width="4.0" height="7.0" fill="#74625a" fill-opacity="0.72"/>
<rect x="241.0" y="774.8" width="11.0" height="5.0" fill="#c49a7a" fill-opacity="0.72"/>
<rect x="252.0" y="774.8" width="6.0" height="5.0" fill="#866858" fill-opacity="0.72"/>
<rect x="258.0" y="774.6" width="6.0" height="4.0" fill="#f6e6d4" fill-opacity="0.72"/>
<rect x="264.0" y="775.8" width="6.0" height="5.0" fill="#a0785e" fill-opacity="0.72"/>
<rect x="270.0" y="774.6" width="4.0" height="7.0" fill="#e6bc94" fill-opacity="0.72"/>
<rect x="274.0" y="775.2" width="5.0" height="6.0" fill="#f2d6b8" fill-opacity="0.72"/>
<rect x="280.0" y="775.0" width="11.0" height="7.0" fill="#efc8a0" fill-opacity="0.72"/>
<rect x="291.0" y="774.3" width="5.0" height="6.0" fill="#866858" fill-opacity="0.72"/>
<rect x="296.0" y="775.0" width="11.0" height="7.0" fill="#b08264" fill-opacity="0.72"/>
<rect x="307.0" y="775.7" width="6.0" height="4.0" fill="#f6e6d4" fill-opacity="0.72"/>
<rect x="313.0" y="775.6" width="4.0" height="5.0" fill="#a0785e" fill-opacity="0.72"/>
<rect x="317.0" y="775.3" width="9.0" height="6.0" fill="#e6bc94" fill-opacity="0.72"/>
<rect x="326.0" y="774.9" width="4.0" height="7.0" fill="#dca67c" fill-opacity="0.72"/>
<rect x="330.0" y="775.7" width="11.0" height="7.0" fill="#efc8a0" fill-opacity="0.72"/>
<rect x="341.0" y="774.5" width="5.0" height="6.0" fill="#a0785e" fill-opacity="0.72"/>
<rect x="347.0" y="775.1" width="5.0" height="6.0" fill="#c0967a" fill-opacity="0.72"/>
<rect x="352.0" y="774.4" width="9.0" height="5.0" fill="#e6bc94" fill-opacity="0.72"/>
<rect x="361.0" y="774.5" width="5.0" height="4.0" fill="#dca67c" fill-opacity="0.72"/>
<rect x="367.0" y="775.4" width="9.0" height="4.0" fill="#f6e6d4" fill-opacity="0.72"/>
<rect x="376.0" y="775.6" width="11.0" height="6.0" fill="#e6bc94" fill-opacity="0.72"/>
<rect x="135.0" y="779.4" width="5.0" height="4.0" fill="#f0dcc6" fill-opacity="0.72"/>
<rect x="141.0" y="780.9" width="7.0" height="7.0" fill="#8a7466" fill-opacity="0.72"/>
<rect x="148.0" y="779.2" width="6.0" height="6.0" fill="#74625a" fill-opacity="0.72"/>
<rect x="154.0" y="779.1" width="7.0" height="4.0" fill="#caa68a" fill-opacity="0.72"/>
<rect x="161.0" y="779.9" width="4.0" height="7.0" fill="#c49a7a" fill-opacity="0.72"/>
<rect x="165.0" y="780.7" width="11.0" height="7.0" fill="#dcc0a6" fill-opacity="0.72"/>
<rect x="177.0" y="779.6" width="11.0" height="7.0" fill="#ecd2b8" fill-opacity="0.72"/>
<rect x="188.0" y="780.8" width="7.0" height="4.0" fill="#ecd2b8" fill-opacity="0.72"/>
<rect x="195.0" y="780.5" width="6.0" height="7.0" fill="#b09078" fill-opacity="0.72"/>
<rect x="201.0" y="779.4" width="7.0" height="4.0" fill="#a08470" fill-opacity="0.72"/>
<rect x="208.0" y="779.6" width="11.0" height="4.0" fill="#caa68a" fill-opacity="0.72"/>
<rect x="219.0" y="779.7" width="9.0" height="7.0" fill="#c49a7a" fill-opacity="0.72"/>
<rect x="228.0" y="780.2" width="4.0" height="4.0" fill="#8a7466" fill-opacity="0.72"/>
<rect x="232.0" y="779.4" width="11.0" height="5.0" fill="#8a7466" fill-opacity="0.72"/>
<rect x="243.0" y="779.5" width="7.0" height="4.0" fill="#b0907c" fill-opacity="0.72"/>
<rect x="250.0" y="780.5" width="4.0" height="7.0" fill="#866858" fill-opacity="0.72"/>
<rect x="254.0" y="780.5" width="7.0" height="5.0" fill="#f2d6b8" fill-opacity="0.72"/>
<rect x="262.0" y="780.8" width="7.0" height="7.0" fill="#dca67c" fill-opacity="0.72"/>
<rect x="270.0" y="780.4" width="4.0" height="7.0" fill="#efc8a0" fill-opacity="0.72"/>
<rect x="274.0" y="779.7" width="11.0" height="4.0" fill="#b08264" fill-opacity="0.72"/>
<rect x="285.0" y="780.1" width="6.0" height="7.0" fill="#c4906a" fill-opacity="0.72"/>
<rect x="291.0" y="780.7" width="9.0" height="6.0" fill="#b08264" fill-opacity="0.72"/>
<rect x="301.0" y="780.5" width="11.0" height="5.0" fill="#b08264" fill-opacity="0.72"/>
<rect x="312.0" y="780.2" width="9.0" height="5.0" fill="#dca67c" fill-opacity="0.72"/>
<rect x="322.0" y="781.0" width="5.0" height="5.0" fill="#c0967a" fill-opacity="0.72"/>
<rect x="328.0" y="780.6" width="5.0" height="4.0" fill="#f2d6b8" fill-opacity="0.72"/>
<rect x="333.0" y="779.8" width="5.0" height="7.0" fill="#efc8a0" fill-opacity="0.72"/>
<rect x="338.0" y="779.5" width="6.0" height="4.0" fill="#dca67c" fill-opacity="0.72"/>
<rect x="344.0" y="780.8" width="7.0" height="5.0" fill="#f2d6b8" fill-opacity="0.72"/>
<rect x="352.0" y="780.8" width="9.0" height="4.0" fill="#c0967a" fill-opacity="0.72"/>
<rect x="361.0" y="779.3" width="11.0" height="6.0" fill="#efc8a0" fill-opacity="0.72"/>
<rect x="372.0" y="780.5" width="6.0" height="6.0" fill="#f2d6b8" fill-opacity="0.72"/>
<rect x="135.0" y="785.1" width="5.0" height="5.0" fill="#7e6a5e" fill-opacity="0.72"/>
<rect x="140.0" y="784.4" width="7.0" height="4.0" fill="#74625a" fill-opacity="0.72"/>
<rect x="148.0" y="785.7" width="5.0" height="6.0" fill="#c49a7a" fill-opacity="0.72"/>
<rect x="153.0" y="784.4" width="9.0" height="4.0" fill="#8a7466" fill-opacity="0.72"/>
<rect x="162.0" y="784.8" width="4.0" height="5.0" fill="#b09078" fill-opacity="0.72"/>
<rect x="167.0" y="785.0" width="7.0" height="5.0" fill="#caa68a" fill-opacity="0.72"/>
<rect x="174.0" y="785.3" width="5.0" height="6.0" fill="#dcc0a6" fill-opacity="0.72"/>
<rect x="179.0" y="785.9" width="11.0" height="5.0" fill="#74625a" fill-opacity="0.72"/>
<rect x="191.0" y="784.8" width="4.0" height="7.0" fill="#caa68a" fill-opacity="0.72"/>
<rect x="196.0" y="785.0" width="11.0" height="7.0" fill="#a08470" fill-opacity="0.72"/>
<rect x="207.0" y="784.2" width="11.0" height="7.0" fill="#74625a" fill-opacity="0.72"/>
<rect x="218.0" y="785.0" width="9.0" height="6.0" fill="#b09078" fill-opacity="0.72"/>
<rect x="227.0" y="784.6" width="4.0" height="6.0" fill="#dcc0a6" fill-opacity="0.72"/>
<rect x="232.0" y="784.6" width="7.0" height="7.0" fill="#7e6a5e" fill-opacity="0.72"/>
<rect x="239.0" y="784.2" width="9.0" height="4.0" fill="#ecd2b8" fill-opacity="0.72"/>
<rect x="248.0" y="785.0" width="5.0" height="7.0" fill="#dcc0a6" fill-opacity="0.72"/>
<rect x="253.0" y="784.6" width="9.0" height="5.0" fill="#c0967a" fill-opacity="0.72"/>
<rect x="262.0" y="785.7" width="5.0" height="4.0" fill="#dca67c" fill-opacity="0.72"/>
<rect x="267.0" y="785.3" width="9.0" height="5.0" fill="#f2d6b8" fill-opacity="0.72"/>
<rect x="276.0" y="784.2" width="9.0" height="4.0" fill="#c4906a" fill-opacity="0.72"/>
<rect x="285.0" y="784.6" width="4.0" height="7.0" fill="#e6bc94" fill-opacity="0.72"/>
<rect x="290.0" y="784.3" width="6.0" height="4.0" fill="#dca67c" fill-opacity="0.72"/>
<rect x="296.0" y="784.7" width="7.0" height="7.0" fill="#a0785e" fill-opacity="0.72"/>
<rect x="304.0" y="784.1" width="5.0" height="4.0" fill="#b08264" fill-opacity="0.72"/>
<rect x="309.0" y="784.3" width="6.0" height="6.0" fill="#f6e6d4" fill-opacity="0.72"/>
<rect x="315.0" y="785.7" width="5.0" height="5.0" fill="#b08264" fill-opacity="0.72"/>
<rect x="321.0" y="785.7" width="4.0" height="5.0" fill="#dca67c" fill-opacity="0.72"/>
<rect x="325.0" y="785.3" width="7.0" height="4.0" fill="#a0785e" fill-opacity="0.72"/>
<rect x="333.0" y="785.3" width="9.0" height="5.0" fill="#c0967a" fill-opacity="0.72"/>
<rect x="342.0" y="785.5" width="4.0" height="4.0" fill="#b08264" fill-opacity="0.72"/>
<rect x="346.0" y="784.7" width="6.0" height="7.0" fill="#a0785e" fill-opacity="0.72"/>
<rect x="352.0" y="784.4" width="7.0" height="4.0" fill="#a0785e" fill-opacity="0.72"/>
<rect x="359.0" y="784.4" width="4.0" height="5.0" fill="#b08264" fill-opacity="0.72"/>
<rect x="363.0" y="784.7" width="9.0" height="6.0" fill="#b08264" fill-opacity="0.72"/>
<rect x="373.0" y="785.0" width="9.0" height="4.0" fill="#efc8a0" fill-opacity="0.72"/>
<rect x="135.0" y="789.3" width="5.0" height="5.0" fill="#a08470" fill-opacity="0.72"/>
<rect x="141.0" y="789.9" width="4.0" height="7.0" fill="#b0907c" fill-opacity="0.72"/>
<rect x="146.0" y="790.2" width="4.0" height="4.0" fill="#dcc0a6" fill-opacity="0.72"/>
<rect x="150.0" y="790.6" width="9.0" height="6.0" fill="#74625a" fill-opacity="0.72"/>
<rect x="159.0" y="789.5" width="5.0" height="6.0" fill="#ecd2b8" fill-opacity="0.72"/>
<rect x="164.0" y="790.6" width="11.0" height="4.0" fill="#8a7466" fill-opacity="0.72"/>
<rect x="175.0" y="789.8" width="4.0" height="7.0" fill="#7e6a5e" fill-opacity="0.72"/>
<rect x="179.0" y="790.1" width="4.0" height="5.0" fill="#b0907c" fill-opacity="0.72"/>
<rect x="184.0" y="790.0" width="6.0" height="6.0" fill="#c49a7a" fill-opacity="0.72"/>
<rect x="190.0" y="790.7" width="9.0" height="6.0" fill="#b09078" fill-opacity="0.72"/>
<rect x="200.0" y="790.6" width="11.0" height="5.0" fill="#7e6a5e" fill-opacity="0.72"/>
<rect x="211.0" y="790.3" width="4.0" height="7.0" fill="#ecd2b8" fill-opacity="0.72"/>
<rect x="216.0" y="790.0" width="6.0" height="5.0" fill="#a08470" fill-opacity="0.72"/>
<rect x="222.0" y="789.1" width="9.0" height="7.0" fill="#a08470" fill-opacity="0.72"/>
<rect x="232.0" y="789.9" width="11.0" height="4.0" fill="#7e6a5e" fill-opacity="0.72"/>
<rect x="243.0" y="789.0" width="6.0" height="5.0" fill="#7e6a5e" fill-opacity="0.72"/>
<rect x="249.0" y="790.7" width="7.0" height="7.0" fill="#a08470" fill-opacity="0.72"/>
<rect x="256.0" y="790.1" width="4.0" height="4.0" fill="#a0785e" fill-opacity="0.72"/>
<rect x="261.0" y="789.3" width="9.0" height="5.0" fill="#efc8a0" fill-opacity="0.72"/>
<rect x="270.0" y="790.6" width="7.0" height="4.0" fill="#dca67c" fill-opacity="0.72"/>
<rect x="278.0" y="790.0" width="9.0" height="6.0" fill="#efc8a0" fill-opacity="0.72"/>
<rect x="288.0" y="789.5" width="9.0" height="5.0" fill="#866858" fill-opacity="0.72"/>
<rect x="297.0" y="789.6" width="7.0" height="7.0" fill="#e6bc94" fill-opacity="0.72"/>
<rect x="304.0" y="789.3" width="6.0" height="5.0" fill="#e6bc94" fill-opacity="0.72"/>
<rect x="311.0" y="790.0" width="5.0" height="5.0" fill="#f6e6d4" fill-opacity="0.72"/>
<rect x="316.0" y="790.8" width="4.0" height="5.0" fill="#866858" fill-opacity="0.72"/>
<rect x="320.0" y="789.6" width="4.0" height="7.0" fill="#c0967a" fill-opacity="0.72"/>
<rect x="324.0" y="789.5" width="4.0" height="4.0" fill="#efc8a0" fill-opacity="0.72"/>
<rect x="328.0" y="789.9" width="4.0" height="5.0" fill="#866858" fill-opacity="0.72"/>
<rect x="332.0" y="790.9" width="6.0" height="6.0" fill="#dca67c" fill-opacity="0.72"/>
<rect x="339.0" y="789.8" width="5.0" height="4.0" fill="#a0785e" fill-opacity="0.72"/>
<rect x="345.0" y="790.4" width="4.0" height="6.0" fill="#efc8a0" fill-opacity="0.72"/>
<rect x="350.0" y="790.9" width="5.0" height="7.0" fill="#866858" fill-opacity="0.72"/>
<rect x="355.0" y="789.4" width="7.0" height="7.0" fill="#e6bc94" fill-opacity="0.72"/>
<rect x="362.0" y="790.6" width="5.0" height="5.0" fill="#c0967a" fill-opacity="0.72"/>
<rect x="367.0" y="790.2" width="5.0" height="7.0" fill="#f2d6b8" fill-opacity="0.72"/>
<rect x="372.0" y="791.0" width="7.0" height="7.0" fill="#f6e6d4" fill-opacity="0.72"/>
<rect x="135.0" y="795.1" width="5.0" height="7.0" fill="#ecd2b8" fill-opacity="0.72"/>
<rect x="140.0" y="794.7" width="4.0" height="4.0" fill="#a08470" fill-opacity="0.72"/>
<rect x="144.0" y="794.4" width="9.0" height="4.0" fill="#b09078" fill-opacity="0.72"/>
<rect x="153.0" y="795.8" width="9.0" height="7.0" fill="#7e6a5e" fill-opacity="0.72"/>
<rect x="163.0" y="794.7" width="5.0" height="6.0" fill="#b0907c" fill-opacity="0.72"/>
<rect x="168.0" y="795.5" width="11.0" height="6.0" fill="#8a7466" fill-opacity="0.72"/>
<rect x="180.0" y="795.7" width="4.0" height="4.0" fill="#caa68a" fill-opacity="0.72"/>
<rect x="184.0" y="794.5" width="4.0" height="7.0" fill="#caa68a" fill-opacity="0.72"/>
<rect x="189.0" y="794.8" width="11.0" height="4.0" fill="#a08470" fill-opacity="0.72"/>
<rect x="200.0" y="794.3" width="7.0" height="4.0" fill="#ecd2b8" fill-opacity="0.72"/>
<rect x="208.0" y="794.6" width="5.0" height="4.0" fill="#ecd2b8" fill-opacity="0.72"/>
<rect x="213.0" y="795.4" width="7.0" height="5.0" fill="#b09078" fill-opacity="0.72"/>
<rect x="220.0" y="794.8" width="6.0" height="7.0" fill="#c49a7a" fill-opacity="0.72"/>
<rect x="226.0" y="794.3" width="6.0" height="7.0" fill="#74625a" fill-opacity="0.72"/>
<rect x="233.0" y="794.6" width="6.0" height="5.0" fill="#b0907c" fill-opacity="0.72"/>
<rect x="239.0" y="794.1" width="9.0" height="5.0" fill="#8a7466" fill-opacity="0.72"/>
<rect x="248.0" y="794.0" width="11.0" height="7.0" fill="#7e6a5e" fill-opacity="0.72"/>
<rect x="260.0" y="795.1" width="6.0" height="4.0" fill="#f2d6b8" fill-opacity="0.72"/>
<rect x="266.0" y="794.5" width="11.0" height="4.0" fill="#dca67c" fill-opacity="0.72"/>
<rect x="278.0" y="794.2" width="6.0" height="4.0" fill="#866858" fill-opacity="0.72"/>
<rect x="284.0" y="795.9" width="4.0" height="7.0" fill="#866858" fill-opacity="0.72"/>
<rect x="288.0" y="794.3" width="7.0" height="6.0" fill="#f2d6b8" fill-opacity="0.72"/>
<rect x="295.0" y="794.7" width="5.0" height="7.0" fill="#a0785e" fill-opacity="0.72"/>
<rect x="301.0" y="795.8" width="5.0" height="4.0" fill="#dca67c" fill-opacity="0.72"/>
<rect x="306.0" y="794.6" width="7.0" height="6.0" fill="#c0967a" fill-opacity="0.72"/>
<rect x="313.0" y="795.8" width="7.0" height="4.0" fill="#dca67c" fill-opacity="0.72"/>
<rect x="320.0" y="795.0" width="6.0" height="4.0" fill="#866858" fill-opacity="0.72"/>
<rect x="327.0" y="795.8" width="6.0" height="7.0" fill="#dca67c" fill-opacity="0.72"/>
<rect x="333.0" y="794.6" width="4.0" height="4.0" fill="#dca67c" fill-opacity="0.72"/>
<rect x="337.0" y="795.6" width="9.0" height="6.0" fill="#b08264" fill-opacity="0.72"/>
<rect x="346.0" y="795.2" width="11.0" height="7.0" fill="#866858" fill-opacity="0.72"/>
<rect x="357.0" y="795.3" width="4.0" height="5.0" fill="#c4906a" fill-opacity="0.72"/>
<rect x="362.0" y="794.8" width="9.0" height="7.0" fill="#efc8a0" fill-opacity="0.72"/>
<rect x="371.0" y="794.8" width="4.0" height="7.0" fill="#f6e6d4" fill-opacity="0.72"/>
<rect x="375.0" y="794.5" width="4.0" height="5.0" fill="#c0967a" fill-opacity="0.72"/>
<rect x="135.0" y="799.3" width="6.0" height="7.0" fill="#dcc0a6" fill-opacity="0.72"/>
<rect x="141.0" y="800.4" width="6.0" height="5.0" fill="#a08470" fill-opacity="0.72"/>
<rect x="147.0" y="801.0" width="9.0" height="4.0" fill="#b09078" fill-opacity="0.72"/>
<rect x="156.0" y="800.5" width="5.0" height="7.0" fill="#c49a7a" fill-opacity="0.72"/>
<rect x="161.0" y="799.7" width="9.0" height="6.0" fill="#a08470" fill-opacity="0.72"/>
<rect x="170.0" y="800.4" width="6.0" height="5.0" fill="#74625a" fill-opacity="0.72"/>
<rect x="176.0" y="800.2" width="5.0" height="5.0" fill="#caa68a" fill-opacity="0.72"/>
<rect x="181.0" y="799.8" width="9.0" height="6.0" fill="#caa68a" fill-opacity="0.72"/>
<rect x="190.0" y="800.3" width="11.0" height="7.0" fill="#ecd2b8" fill-opacity="0.72"/>
<rect x="201.0" y="800.5" width="6.0" height="5.0" fill="#b09078" fill-opacity="0.72"/>
<rect x="207.0" y="799.2" width="4.0" height="4.0" fill="#a08470" fill-opacity="0.72"/>
<rect x="211.0" y="799.3" width="9.0" height="7.0" fill="#dcc0a6" fill-opacity="0.72"/>
<rect x="220.0" y="799.5" width="7.0" height="4.0" fill="#caa68a" fill-opacity="0.72"/>
<rect x="228.0" y="800.4" width="11.0" height="7.0" fill="#a08470" fill-opacity="0.72"/>
<rect x="239.0" y="799.7" width="6.0" height="6.0" fill="#8a7466" fill-opacity="0.72"/>
<rect x="245.0" y="801.0" width="9.0" height="5.0" fill="#7e6a5e" fill-opacity="0.72"/>
<rect x="255.0" y="800.5" width="11.0" height="5.0" fill="#efc8a0" fill-opacity="0.72"/>
<rect x="266.0" y="799.8" width="5.0" height="5.0" fill="#f2d6b8" fill-opacity="0.72"/>
<rect x="272.0" y="800.9" width="6.0" height="5.0" fill="#a0785e" fill-opacity="0.72"/>
<rect x="278.0" y="800.4" width="9.0" height="5.0" fill="#b08264" fill-opacity="0.72"/>
<rect x="287.0" y="800.9" width="6.0" height="7.0" fill="#866858" fill-opacity="0.72"/>
<rect x="293.0" y="800.7" width="4.0" height="5.0" fill="#c4906a" fill-opacity="0.72"/>
<rect x="297.0" y="801.0" width="6.0" height="6.0" fill="#c0967a" fill-opacity="0.72"/>
<rect x="303.0" y="800.7" width="7.0" height="6.0" fill="#e6bc94" fill-opacity="0.72"/>
<rect x="310.0" y="799.6" width="5.0" height="6.0" fill="#c4906a" fill-opacity="0.72"/>
<rect x="316.0" y="800.4" width="6.0" height="5.0" fill="#866858" fill-opacity="0.72"/>
<rect x="322.0" y="800.1" width="5.0" height="7.0" fill="#f2d6b8" fill-opacity="0.72"/>
<rect x="327.0" y="800.1" width="7.0" height="5.0" fill="#c4906a" fill-opacity="0.72"/>
<rect x="334.0" y="799.3" width="7.0" height="7.0" fill="#c4906a" fill-opacity="0.72"/>
<rect x="341.0" y="800.3" width="6.0" height="5.0" fill="#b08264" fill-opacity="0.72"/>
<rect x="347.0" y="800.0" width="6.0" height="5.0" fill="#c4906a" fill-opacity="0.72"/>
<rect x="353.0" y="799.1" width="9.0" height="6.0" fill="#c0967a" fill-opacity="0.72"/>
<rect x="362.0" y="799.0" width="4.0" height="6.0" fill="#c4906a" fill-opacity="0.72"/>
<rect x="366.0" y="801.0" width="7.0" height="5.0" fill="#f2d6b8" fill-opacity="0.72"/>
<rect x="373.0" y="799.7" width="7.0" height="4.0" fill="#866858" fill-opacity="0.72"/>
<rect x="135.0" y="805.1" width="7.0" height="4.0" fill="#ecd2b8" fill-opacity="0.72"/>
<rect x="143.0" y="804.4" width="9.0" height="6.0" fill="#a08470" fill-opacity="0.72"/>
<rect x="152.0" y="805.7" width="5.0" height="7.0" fill="#7e6a5e" fill-opacity="0.72"/>
<rect x="158.0" y="805.9" width="4.0" height="5.0" fill="#dcc0a6" fill-opacity="0.72"/>
<rect x="163.0" y="804.7" width="4.0" height="4.0" fill="#a08470" fill-opacity="0.72"/>
<rect x="168.0" y="804.9" width="6.0" height="4.0" fill="#b09078" fill-opacity="0.72"/>
<rect x="174.0" y="805.5" width="4.0" height="6.0" fill="#dcc0a6" fill-opacity="0.72"/>
<rect x="178.0" y="804.6" width="5.0" height="7.0" fill="#74625a" fill-opacity="0.72"/>
<rect x="184.0" y="804.8" width="11.0" height="4.0" fill="#f0dcc6" fill-opacity="0.72"/>
<rect x="196.0" y="804.0" width="7.0" height="6.0" fill="#7e6a5e" fill-opacity="0.72"/>
<rect x="204.0" y="804.8" width="5.0" height="5.0" fill="#caa68a" fill-opacity="0.72"/>
<rect x="209.0" y="805.3" width="9.0" height="6.0" fill="#caa68a" fill-opacity="0.72"/>
<rect x="218.0" y="804.1" width="6.0" height="6.0" fill="#a08470" fill-opacity="0.72"/>
<rect x="225.0" y="804.7" width="6.0" height="4.0" fill="#a08470" fill-opacity="0.72"/>
<rect x="232.0" y="805.5" width="5.0" height="5.0" fill="#dcc0a6" fill-opacity="0.72"/>
<rect x="238.0" y="804.7" width="6.0" height="5.0" fill="#8a7466" fill-opacity="0.72"/>
<rect x="244.0" y="804.4" width="5.0" height="6.0" fill="#caa68a" fill-opacity="0.72"/>
<rect x="249.0" y="804.1" width="4.0" height="7.0" fill="#b09078" fill-opacity="0.72"/>
<rect x="253.0" y="805.8" width="6.0" height="5.0" fill="#e6bc94" fill-opacity="0.72"/>
<rect x="259.0" y="806.0" width="4.0" height="4.0" fill="#efc8a0" fill-opacity="0.72"/>
<rect x="263.0" y="804.8" width="7.0" height="5.0" fill="#f6e6d4" fill-opacity="0.72"/>
<rect x="271.0" y="805.4" width="5.0" height="6.0" fill="#c4906a" fill-opacity="0.72"/>
<rect x="276.0" y="806.0" width="5.0" height="6.0" fill="#c0967a" fill-opacity="0.72"/>
<rect x="281.0" y="804.4" width="11.0" height="7.0" fill="#e6bc94" fill-opacity="0.72"/>
<rect x="293.0" y="805.0" width="6.0" height="7.0" fill="#866858" fill-opacity="0.72"/>
<rect x="300.0" y="804.9" width="4.0" height="4.0" fill="#f6e6d4" fill-opacity="0.72"/>
<rect x="304.0" y="804.5" width="7.0" height="7.0" fill="#c0967a" fill-opacity="0.72"/>
<rect x="312.0" y="805.8" width="9.0" height="4.0" fill="#c0967a" fill-opacity="0.72"/>
<rect x="322.0" y="804.6" width="11.0" height="7.0" fill="#f6e6d4" fill-opacity="0.72"/>
<rect x="333.0" y="804.3" width="9.0" height="4.0" fill="#dca67c" fill-opacity="0.72"/>
<rect x="342.0" y="804.6" width="6.0" height="6.0" fill="#efc8a0" fill-opacity="0.72"/>
<rect x="349.0" y="805.7" width="7.0" height="7.0" fill="#e6bc94" fill-opacity="0.72"/>
<rect x="356.0" y="804.4" width="7.0" height="4.0" fill="#f2d6b8" fill-opacity="0.72"/>
<rect x="364.0" y="805.0" width="5.0" height="4.0" fill="#c4906a" fill-opacity="0.72"/>
<rect x="369.0" y="805.4" width="4.0" height="5.0" fill="#e6bc94" fill-opacity="0.72"/>
<rect x="373.0" y="804.4" width="9.0" height="6.0" fill="#f6e6d4" fill-opacity="0.72"/>
<rect x="135.0" y="809.6" width="7.0" height="5.0" fill="#f0dcc6" fill-opacity="0.72"/>
<rect x="143.0" y="810.1" width="5.0" height="4.0" fill="#b0907c" fill-opacity="0.72"/>
<rect x="148.0" y="810.7" width="5.0" height="4.0" fill="#f0dcc6" fill-opacity="0.72"/>
<rect x="154.0" y="809.4" width="4.0" height="5.0" fill="#caa68a" fill-opacity="0.72"/>
<rect x="158.0" y="810.7" width="4.0" height="6.0" fill="#ecd2b8" fill-opacity="0.72"/>
<rect x="162.0" y="809.8" width="7.0" height="5.0" fill="#7e6a5e" fill-opacity="0.72"/>
<rect x="170.0" y="809.1" width="9.0" height="7.0" fill="#f0dcc6" fill-opacity="0.72"/>
<rect x="180.0" y="810.1" width="5.0" height="6.0" fill="#ecd2b8" fill-opacity="0.72"/>
<rect x="185.0" y="810.4" width="7.0" height="4.0" fill="#caa68a" fill-opacity="0.72"/>
<rect x="193.0" y="809.4" width="6.0" height="5.0" fill="#ecd2b8" fill-opacity="0.72"/>
<rect x="199.0" y="809.3" width="5.0" height="7.0" fill="#dcc0a6" fill-opacity="0.72"/>
<rect x="204.0" y="810.2" width="6.0" height="6.0" fill="#7e6a5e" fill-opacity="0.72"/>
<rect x="210.0" y="810.4" width="5.0" height="4.0" fill="#b0907c" fill-opacity="0.72"/>
<rect x="216.0" y="810.5" width="11.0" height="6.0" fill="#a08470" fill-opacity="0.72"/>
<rect x="227.0" y="809.5" width="5.0" height="4.0" fill="#c49a7a" fill-opacity="0.72"/>
<rect x="232.0" y="809.9" width="9.0" height="7.0" fill="#a08470" fill-opacity="0.72"/>
<rect x="242.0" y="810.0" width="4.0" height="4.0" fill="#caa68a" fill-opacity="0.72"/>
<rect x="246.0" y="809.2" width="5.0" height="7.0" fill="#7e6a5e" fill-opacity="0.72"/>
<rect x="251.0" y="809.5" width="6.0" height="4.0" fill="#f6e6d4" fill-opacity="0.72"/>
<rect x="257.0" y="810.2" width="7.0" height="5.0" fill="#866858" fill-opacity="0.72"/>
<rect x="264.0" y="809.8" width="11.0" height="4.0" fill="#dca67c" fill-opacity="0.72"/>
<rect x="275.0" y="809.6" width="9.0" height="7.0" fill="#b08264" fill-opacity="0.72"/>
<rect x="285.0" y="809.8" width="4.0" height="5.0" fill="#e6bc94" fill-opacity="0.72"/>
<rect x="289.0" y="809.8" width="9.0" height="6.0" fill="#866858" fill-opacity="0.72"/>
<rect x="298.0" y="810.3" width="4.0" height="4.0" fill="#c0967a" fill-opacity="0.72"/>
<rect x="302.0" y="809.0" width="5.0" height="4.0" fill="#dca67c" fill-opacity="0.72"/>
<rect x="307.0" y="810.3" width="11.0" height="6.0" fill="#e6bc94" fill-opacity="0.72"/>
<rect x="318.0" y="809.3" width="7.0" height="4.0" fill="#dca67c" fill-opacity="0.72"/>
<rect x="326.0" y="809.1" width="6.0" height="7.0" fill="#efc8a0" fill-opacity="0.72"/>
<rect x="332.0" y="810.7" width="4.0" height="7.0" fill="#866858" fill-opacity="0.72"/>
<rect x="337.0" y="809.1" width="9.0" height="4.0" fill="#e6bc94" fill-opacity="0.72"/>
<rect x="346.0" y="810.0" width="11.0" height="7.0" fill="#f2d6b8" fill-opacity="0.72"/>
<rect x="358.0" y="810.7" width="5.0" height="7.0" fill="#dca67c" fill-opacity="0.72"/>
<rect x="364.0" y="809.0" width="7.0" height="4.0" fill="#c4906a" fill-opacity="0.72"/>
<rect x="372.0" y="810.6" width="11.0" height="6.0" fill="#f6e6d4" fill-opacity="0.72"/>
<rect x="135.0" y="776.0" width="120.0" height="22.0" fill="#5a4a44" fill-opacity="0.28"/>
<rect x="255.0" y="770.0" width="122.0" height="5.0" fill="#6a4a3a" fill-opacity="0.25"/>
<rect x="255.0" y="796.0" width="122.0" height="16.0" fill="#5a4034" fill-opacity="0.3"/>
<rect x="344.5" y="777.5" width="26.0" height="18.0" fill="#e8dacb"/>
<rect x="352.0" y="781.0" width="9.0" height="13.0" fill="#c4b6aa"/>
<rect x="338.0" y="769.0" width="16.0" height="6.0" fill="#ecd4bc"/>
<rect x="345.0" y="795.5" width="25.0" height="3.0" fill="#8a7468"/>
<rect x="192.0" y="789.0" width="46.0" height="24.0" fill="#6f6a6c"/>
<rect x="198.0" y="792.0" width="32.0" height="4.0" fill="#9a98a0"/>
<rect x="203.0" y="799.0" width="28.0" height="4.0" fill="#55525a"/>
<rect x="196.0" y="805.0" width="40.0" height="6.0" fill="#7a6250"/>
<rect x="278.0" y="789.0" width="66.0" height="24.0" fill="#7a6a62"/>
<rect x="288.0" y="792.0" width="11.0" height="8.0" fill="#c87838"/>
<rect x="283.0" y="801.0" width="44.0" height="5.0" fill="#8a888e"/>
<rect x="280.0" y="807.0" width="56.0" height="6.0" fill="#54443e"/>
<path d="M300 790l34 20h-14l-28-18z" fill="#3a2418" fill-opacity=".85"/>
<path d="M210 790l-30 20h12l26-18z" fill="#2e1e16" fill-opacity=".8"/>
<path d="M135 804c8-3 20-3 28 0s10 3 16 1 12 2 20 3 20 2 30 4v20H135z" fill="#4e3418"/>
<path d="M135 809c10-2 24 1 30 2s12 4 22 3 10 3 18 4v12H135z" fill="#8c5622"/>
<path d="M150 813c8-3 18 0 24 3l-4 6h-22z" fill="#5a3a18"/>
<rect x="135.0" y="817.0" width="26.0" height="12.0" fill="#5e2a1c"/>
<rect x="150.0" y="812.5" width="4.0" height="11.0" fill="#c8402a"/>
<rect x="157.0" y="815.0" width="5.0" height="9.0" fill="#e0d0c0"/>
<rect x="146.0" y="819.0" width="4.0" height="6.0" fill="#d8c8b8"/>
<rect x="188.0" y="814.0" width="190.0" height="16.0" fill="#5e4e46"/>
<rect x="237.6" y="806.0" width="40.0" height="9.5" fill="#e8dcc8"/>
<rect x="244.0" y="803.5" width="22.0" height="3.0" fill="#d8c4a8"/>
<rect x="215.0" y="816.0" width="75.0" height="5.0" fill="#9a9088"/>
<rect x="188.0" y="818.0" width="6.0" height="3.0" fill="#d8c8b8" fill-opacity="0.8"/>
<rect x="195.0" y="812.0" width="5.0" height="3.0" fill="#b86a40" fill-opacity="0.8"/>
<rect x="201.0" y="820.0" width="8.0" height="5.0" fill="#d8c8b8" fill-opacity="0.8"/>
<rect x="209.0" y="820.0" width="5.0" height="5.0" fill="#d8c8b8" fill-opacity="0.8"/>
<rect x="214.0" y="814.0" width="8.0" height="3.0" fill="#a08878" fill-opacity="0.8"/>
<rect x="222.0" y="820.0" width="8.0" height="4.0" fill="#b86a40" fill-opacity="0.8"/>
<rect x="231.0" y="814.0" width="4.0" height="5.0" fill="#e0d4c8" fill-opacity="0.8"/>
<rect x="236.0" y="814.0" width="3.0" height="5.0" fill="#e0d4c8" fill-opacity="0.8"/>
<rect x="239.0" y="812.0" width="8.0" height="4.0" fill="#8a7a70" fill-opacity="0.8"/>
<rect x="247.0" y="814.0" width="8.0" height="3.0" fill="#4a3c36" fill-opacity="0.8"/>
<rect x="257.0" y="818.0" width="4.0" height="5.0" fill="#4a3c36" fill-opacity="0.8"/>
<rect x="263.0" y="818.0" width="3.0" height="3.0" fill="#8a7a70" fill-opacity="0.8"/>
<rect x="266.0" y="818.0" width="3.0" height="3.0" fill="#b86a40" fill-opacity="0.8"/>
<rect x="271.0" y="812.0" width="8.0" height="4.0" fill="#d8c8b8" fill-opacity="0.8"/>
<rect x="280.0" y="820.0" width="5.0" height="5.0" fill="#c8a888" fill-opacity="0.8"/>
<rect x="285.0" y="818.0" width="6.0" height="4.0" fill="#d8c8b8" fill-opacity="0.8"/>
<rect x="291.0" y="820.0" width="5.0" height="3.0" fill="#a08878" fill-opacity="0.8"/>
<rect x="297.0" y="818.0" width="5.0" height="3.0" fill="#a08878" fill-opacity="0.8"/>
<rect x="304.0" y="820.0" width="4.0" height="5.0" fill="#d8c8b8" fill-opacity="0.8"/>
<rect x="309.0" y="816.0" width="5.0" height="5.0" fill="#4a3c36" fill-opacity="0.8"/>
<rect x="315.0" y="816.0" width="4.0" height="3.0" fill="#e0d4c8" fill-opacity="0.8"/>
<rect x="320.0" y="816.0" width="6.0" height="5.0" fill="#e0d4c8" fill-opacity="0.8"/>
<rect x="327.0" y="812.0" width="6.0" height="3.0" fill="#b86a40" fill-opacity="0.8"/>
<rect x="335.0" y="814.0" width="3.0" height="5.0" fill="#e0d4c8" fill-opacity="0.8"/>
<rect x="340.0" y="818.0" width="5.0" height="3.0" fill="#a08878" fill-opacity="0.8"/>
<rect x="345.0" y="812.0" width="5.0" height="4.0" fill="#b86a40" fill-opacity="0.8"/>
<rect x="351.0" y="820.0" width="4.0" height="5.0" fill="#4a3c36" fill-opacity="0.8"/>
<rect x="356.0" y="816.0" width="3.0" height="4.0" fill="#4a3c36" fill-opacity="0.8"/>
<rect x="359.0" y="820.0" width="3.0" height="4.0" fill="#8a7a70" fill-opacity="0.8"/>
<rect x="363.0" y="816.0" width="8.0" height="4.0" fill="#8a7a70" fill-opacity="0.8"/>
<rect x="373.0" y="812.0" width="8.0" height="4.0" fill="#8a7a70" fill-opacity="0.8"/>
</g>
<g filter="url(#bl)">
<path d="M249.600 334h1.300v22.500h-1.300z" fill="#4a3020"/>
<path d="M246.800 335.300h7" stroke="#4a3020" stroke-width="1"/>
<path d="M249.200 356.500h2.200l.9 12 .9 11h-5.800l.9-11z" fill="#3c2619"/>
<path d="M248 358.500h4.600M247.600 362.500h5.400M247.400 366.500h5.800M247 370.500h6.600M246.600 374.500h7.400M246 378.500h8.600" stroke="#3c2619" stroke-width="1.300"/>
<path d="M246.500 379.500h8l10 8h-27.500z" fill="#4a2c1a" fill-opacity=".5"/>
<path d="M252.500 379.500h2l10 8h-12z" fill="#9a5226" fill-opacity=".55"/>
<path d="M246.500 379.500l-9.500 8M254.500 379.500l10 8M249 379.500l-4 8M252.500 379.500l4.500 8M241 384h20" stroke="#3c2418" stroke-width="1" fill="none"/>
<path d="M234.600 387.300h32.800v5l-1.500 7.300h-29.800l-1.500-7.300z" fill="#2e1c13"/>
<path d="M253 388h11.500v5h-11.500zM254 393.500h10l-.8 6h-9.200z" fill="#8a4a24"/>
<path d="M238 391h27M237 395.500h29" stroke="#6a4028" stroke-width=".8" stroke-dasharray="1.500 1.500"/>
<path d="M234.200 384.500v7M267.800 384.500v7M236.500 385v4M265.500 385v4" stroke="#5a4030" stroke-width="1"/>
<rect x="235.500" y="400.200" width="31" height="8.500" fill="#3a2418"/>
<rect x="252.800" y="400.600" width="13.500" height="6" fill="#d07a34"/>
<path d="M255 403.400h10" stroke="#f0b070" stroke-width="1.600" stroke-dasharray="1.600 1.200"/>
<path d="M236.700 408.700h29.100l-1.800 9.300l.3 6.600h-25.500l.3-6.600z" fill="#3a2418" fill-opacity=".8"/>
<path d="M253 408.700h12.800l-1.800 9.300l.3 6.600h-11.300z" fill="#8a4822" fill-opacity=".85"/>
<path d="M238 409l5 9M252 409l-6 9M253.500 409l5 9M265 409l-5 9M239 421.500h25" stroke="#2a1810" stroke-width="1.100" fill="none"/>
<polygon points="239.2,418.0 238.9,422.0 238.7,426.0 238.4,430.0 238.2,434.0 237.9,438.0 237.7,442.0 237.4,446.0 237.1,450.0 236.8,454.0 236.5,458.0 236.2,462.0 235.9,466.0 235.7,470.0 235.5,474.0 235.3,478.0 235.1,482.0 234.9,486.0 234.7,490.0 234.5,494.0 234.3,498.0 234.1,502.0 233.9,506.0 233.6,510.0 233.4,514.0 233.2,518.0 233.0,522.0 232.8,526.0 232.6,530.0 232.3,534.0 232.1,538.0 231.8,542.0 231.4,546.0 231.1,550.0 230.7,554.0 230.3,558.0 229.9,562.0 229.5,566.0 229.1,570.0 228.8,574.0 228.4,578.0 228.0,582.0 227.6,586.0 227.2,590.0 226.8,594.0 226.4,598.0 226.0,602.0 225.6,606.0 225.2,610.0 224.7,614.0 224.1,618.0 223.6,622.0 223.0,626.0 222.5,630.0 221.8,634.0 221.1,638.0 220.5,642.0 219.7,646.0 218.9,650.0 218.0,654.0 217.2,658.0 217.0,659.0 288.0,659.0 287.8,658.0 287.1,654.0 286.4,650.0 285.7,646.0 285.0,642.0 284.4,638.0 283.7,634.0 283.0,630.0 282.4,626.0 281.8,622.0 281.1,618.0 280.5,614.0 279.9,610.0 279.5,606.0 279.1,602.0 278.7,598.0 278.4,594.0 278.0,590.0 277.6,586.0 277.2,582.0 276.8,578.0 276.4,574.0 275.9,570.0 275.5,566.0 275.1,562.0 274.7,558.0 274.3,554.0 273.9,550.0 273.4,546.0 273.0,542.0 272.7,538.0 272.4,534.0 272.1,530.0 271.8,526.0 271.5,522.0 271.3,518.0 271.0,514.0 270.7,510.0 270.4,506.0 270.1,502.0 269.8,498.0 269.5,494.0 269.2,490.0 268.9,486.0 268.6,482.0 268.2,478.0 267.9,474.0 267.6,470.0 267.3,466.0 267.0,462.0 266.7,458.0 266.4,454.0 266.1,450.0 265.8,446.0 265.5,442.0 265.2,438.0 264.9,434.0 264.6,430.0 264.3,426.0 263.9,422.0 263.6,418.0" fill="#5a3420" fill-opacity=".22"/>
<polygon points="246.6,418.0 246.5,422.0 246.4,426.0 246.4,430.0 246.3,434.0 246.2,438.0 246.1,442.0 246.0,446.0 245.9,450.0 245.8,454.0 245.7,458.0 245.6,462.0 245.5,466.0 245.5,470.0 245.4,474.0 245.4,478.0 245.5,482.0 245.6,486.0 245.8,490.0 246.0,494.0 246.2,498.0 246.4,502.0 246.6,506.0 246.8,510.0 247.0,514.0 247.2,518.0 247.4,522.0 247.6,526.0 247.8,530.0 248.1,534.0 248.3,538.0 248.4,542.0 248.2,546.0 248.1,550.0 247.9,554.0 247.8,558.0 247.6,562.0 247.5,566.0 247.3,570.0 247.1,574.0 247.0,578.0 246.8,582.0 246.6,586.0 246.4,590.0 246.2,594.0 246.0,598.0 245.8,602.0 245.6,606.0 245.3,610.0 245.1,614.0 244.9,618.0 244.7,622.0 244.4,626.0 244.2,630.0 243.9,634.0 243.6,638.0 243.2,642.0 242.8,646.0 242.4,650.0 242.1,654.0 241.8,658.0 241.8,659.0 255.9,659.0 255.9,658.0 255.9,654.0 255.9,650.0 256.0,646.0 256.0,642.0 256.1,638.0 256.1,634.0 256.1,630.0 256.0,626.0 256.0,622.0 256.0,618.0 256.0,614.0 255.9,610.0 255.9,606.0 256.0,602.0 256.0,598.0 256.0,594.0 256.0,590.0 256.0,586.0 256.1,582.0 256.1,578.0 256.0,574.0 256.0,570.0 256.0,566.0 256.0,562.0 256.0,558.0 255.9,554.0 255.9,550.0 255.9,546.0 255.9,542.0 255.8,538.0 255.6,534.0 255.5,530.0 255.3,526.0 255.2,522.0 255.0,518.0 254.9,514.0 254.7,510.0 254.6,506.0 254.5,502.0 254.3,498.0 254.2,494.0 254.0,490.0 253.8,486.0 253.7,482.0 253.6,478.0 253.5,474.0 253.4,470.0 253.3,466.0 253.3,462.0 253.3,458.0 253.2,454.0 253.2,450.0 253.2,446.0 253.2,442.0 253.1,438.0 253.0,434.0 253.0,430.0 252.9,426.0 252.9,422.0 252.8,418.0" fill="#2c1910" fill-opacity=".86"/>
<polygon points="245.9,418.0 245.8,422.0 245.7,426.0 245.7,430.0 245.6,434.0 245.5,438.0 245.4,442.0 245.2,446.0 245.1,450.0 245.0,454.0 244.8,458.0 244.7,462.0 244.6,466.0 244.5,470.0 244.5,474.0 244.4,478.0 244.3,482.0 244.1,486.0 243.9,490.0 243.6,494.0 243.4,498.0 243.2,502.0 242.9,506.0 242.7,510.0 242.4,514.0 242.1,518.0 241.8,522.0 241.6,526.0 241.3,530.0 241.0,534.0 240.7,538.0 240.4,542.0 240.2,546.0 240.0,550.0 239.7,554.0 239.5,558.0 239.2,562.0 239.0,566.0 238.7,570.0 238.5,574.0 238.2,578.0 238.0,582.0 237.7,586.0 237.4,590.0 237.1,594.0 236.8,598.0 236.6,602.0 236.3,606.0 236.0,610.0 235.6,614.0 235.3,618.0 234.9,622.0 234.6,626.0 234.2,630.0 233.8,634.0 233.3,638.0 232.8,642.0 232.3,646.0 231.7,650.0 231.2,654.0 230.6,658.0 230.5,659.0 241.8,659.0 241.8,658.0 242.1,654.0 242.4,650.0 242.8,646.0 243.2,642.0 243.6,638.0 243.9,634.0 244.2,630.0 244.4,626.0 244.7,622.0 244.9,618.0 245.1,614.0 245.3,610.0 245.6,606.0 245.8,602.0 246.0,598.0 246.2,594.0 246.4,590.0 246.6,586.0 246.8,582.0 247.0,578.0 247.1,574.0 247.3,570.0 247.5,566.0 247.6,562.0 247.8,558.0 247.9,554.0 248.1,550.0 248.2,546.0 248.4,542.0 248.3,538.0 248.1,534.0 247.8,530.0 247.6,526.0 247.4,522.0 247.2,518.0 247.0,514.0 246.8,510.0 246.6,506.0 246.4,502.0 246.2,498.0 246.0,494.0 245.8,490.0 245.6,486.0 245.5,482.0 245.4,478.0 245.4,474.0 245.5,470.0 245.5,466.0 245.6,462.0 245.7,458.0 245.8,454.0 245.9,450.0 246.0,446.0 246.1,442.0 246.2,438.0 246.3,434.0 246.4,430.0 246.4,426.0 246.5,422.0 246.6,418.0" fill="#3a2216" fill-opacity=".28"/>
<polygon points="252.8,418.0 252.9,422.0 252.9,426.0 253.0,430.0 253.0,434.0 253.1,438.0 253.2,442.0 253.2,446.0 253.2,450.0 253.2,454.0 253.3,458.0 253.3,462.0 253.3,466.0 253.4,470.0 253.5,474.0 253.6,478.0 253.7,482.0 253.8,486.0 254.0,490.0 254.2,494.0 254.3,498.0 254.5,502.0 254.6,506.0 254.7,510.0 254.9,514.0 255.0,518.0 255.2,522.0 255.3,526.0 255.5,530.0 255.6,534.0 255.8,538.0 255.9,542.0 255.9,546.0 255.9,550.0 255.9,554.0 256.0,558.0 256.0,562.0 256.0,566.0 256.0,570.0 256.0,574.0 256.1,578.0 256.1,582.0 256.0,586.0 256.0,590.0 256.0,594.0 256.0,598.0 256.0,602.0 255.9,606.0 255.9,610.0 256.0,614.0 256.0,618.0 256.0,622.0 256.0,626.0 256.1,630.0 256.1,634.0 256.1,638.0 256.0,642.0 256.0,646.0 255.9,650.0 255.9,654.0 255.9,658.0 255.9,659.0 267.1,659.0 267.0,658.0 266.7,654.0 266.5,650.0 266.4,646.0 266.3,642.0 266.2,638.0 266.1,634.0 266.0,630.0 265.8,626.0 265.7,622.0 265.6,618.0 265.4,614.0 265.3,610.0 265.2,606.0 265.2,602.0 265.2,598.0 265.1,594.0 265.1,590.0 265.0,586.0 265.0,582.0 264.9,578.0 264.8,574.0 264.7,570.0 264.6,566.0 264.5,562.0 264.4,558.0 264.3,554.0 264.1,550.0 264.0,546.0 263.9,542.0 263.6,538.0 263.3,534.0 263.0,530.0 262.6,526.0 262.3,522.0 261.9,518.0 261.6,514.0 261.3,510.0 261.0,506.0 260.7,502.0 260.3,498.0 260.0,494.0 259.7,490.0 259.3,486.0 259.0,482.0 258.8,478.0 258.6,474.0 258.4,470.0 258.3,466.0 258.1,462.0 258.0,458.0 257.9,454.0 257.8,450.0 257.6,446.0 257.5,442.0 257.4,438.0 257.2,434.0 257.1,430.0 256.9,426.0 256.7,422.0 256.6,418.0" fill="#6a3a1e" fill-opacity=".30"/>
<path d="M253.5 418V659" stroke="#d07832" stroke-width="1.300" fill="none"/>
<path d="M239.2 418.0L245.8 424.6M245.9 418.0L238.8 424.6M238.8 424.6L245.6 433.1M245.8 424.6L238.2 433.1M238.2 433.1L245.4 440.8M245.6 433.1L237.7 440.8M237.7 440.8L245.1 449.3M245.4 440.8L237.1 449.3M237.1 449.3L244.8 457.8M245.1 449.3L236.5 457.8M236.5 457.8L244.6 466.9M244.8 457.8L235.9 466.9M235.9 466.9L244.4 476.0M244.6 466.9L235.4 476.0M235.4 476.0L244.1 486.0M244.4 476.0L234.9 486.0M234.9 486.0L243.5 495.8M244.1 486.0L234.4 495.8M234.4 495.8L242.9 506.3M243.5 495.8L233.9 506.3M233.9 506.3L242.2 517.0M242.9 506.3L233.3 517.0M233.3 517.0L241.4 528.2M242.2 517.0L232.6 528.2M232.6 528.2L240.6 539.4M241.4 528.2L232.0 539.4M232.0 539.4L240.2 546.0M240.6 539.4L231.4 546.0M231.4 546.0L239.6 555.2M240.2 546.0L230.6 555.2M230.6 555.2L239.0 565.0M239.6 555.2L229.6 565.0M229.6 565.0L238.4 575.7M239.0 565.0L228.6 575.7M228.6 575.7L237.6 586.9M238.4 575.7L227.5 586.9M227.5 586.9L236.8 598.8M237.6 586.9L226.3 598.8M226.3 598.8L235.9 611.3M236.8 598.8L225.0 611.3M225.0 611.3L234.7 624.5M235.9 611.3L223.2 624.5M223.2 624.5L233.2 638.4M234.7 624.5L221.1 638.4M221.1 638.4L231.3 653.0M233.2 638.4L218.2 653.0M218.2 653.0L230.5 659.0M231.3 653.0L217.0 659.0" stroke="#38211a" stroke-width="1.450" fill="none"/>
<path d="M263.6 418.0L256.8 424.6M256.6 418.0L264.1 424.6M264.1 424.6L257.2 433.1M256.8 424.6L264.8 433.1M264.8 433.1L257.5 440.8M257.2 433.1L265.5 440.8M265.5 440.8L257.7 449.3M257.5 440.8L266.1 449.3M266.1 449.3L258.0 457.8M257.7 449.3L266.7 457.8M266.7 457.8L258.3 466.9M258.0 457.8L267.4 466.9M267.4 466.9L258.7 476.0M258.3 466.9L268.1 476.0M268.1 476.0L259.3 486.0M258.7 476.0L268.9 486.0M268.9 486.0L260.1 495.8M259.3 486.0L269.7 495.8M269.7 495.8L261.0 506.3M260.1 495.8L270.4 506.3M270.4 506.3L261.9 517.0M261.0 506.3L271.2 517.0M271.2 517.0L262.8 528.2M261.9 517.0L272.0 528.2M272.0 528.2L263.8 539.4M262.8 528.2L272.8 539.4M272.8 539.4L264.0 546.0M263.8 539.4L273.4 546.0M273.4 546.0L264.3 555.2M264.0 546.0L274.4 555.2M274.4 555.2L264.6 565.0M264.3 555.2L275.4 565.0M275.4 565.0L264.8 575.7M264.6 565.0L276.5 575.7M276.5 575.7L265.0 586.9M264.8 575.7L277.7 586.9M277.7 586.9L265.2 598.8M265.0 586.9L278.8 598.8M278.8 598.8L265.3 611.3M265.2 598.8L280.1 611.3M280.1 611.3L265.8 624.5M265.3 611.3L282.1 624.5M282.1 624.5L266.2 638.4M265.8 624.5L284.4 638.4M284.4 638.4L266.7 653.0M266.2 638.4L286.9 653.0M286.9 653.0L267.1 659.0M266.7 653.0L288.0 659.0" stroke="#4e2c1a" stroke-width="1.450" fill="none"/>
<path d="M242.9 506.3L247.4 517.0M246.9 506.3L242.2 517.0M242.2 517.0L248.0 528.2M247.4 517.0L241.4 528.2M241.4 528.2L248.7 539.4M248.0 528.2L240.6 539.4M240.6 539.4L248.5 546.0M248.7 539.4L240.2 546.0M240.2 546.0L248.2 555.2M248.5 546.0L239.6 555.2M239.6 555.2L247.8 565.0M248.2 555.2L239.0 565.0M239.0 565.0L247.4 575.7M247.8 565.0L238.4 575.7M238.4 575.7L246.9 586.9M247.4 575.7L237.6 586.9M237.6 586.9L246.2 598.8M246.9 586.9L236.8 598.8M236.8 598.8L245.6 611.3M246.2 598.8L235.9 611.3M235.9 611.3L244.8 624.5M245.6 611.3L234.7 624.5M234.7 624.5L243.8 638.4M244.8 624.5L233.2 638.4M233.2 638.4L242.5 653.0M243.8 638.4L231.3 653.0M231.3 653.0L242.1 659.0M242.5 653.0L230.5 659.0" stroke="#38211a" stroke-width="1.250" fill="none"/>
<path d="M256.8 424.6L252.7 433.1M252.6 424.6L257.2 433.1M257.2 433.1L252.8 440.8M252.7 433.1L257.5 440.8M257.5 440.8L252.9 449.3M252.8 440.8L257.7 449.3M257.7 449.3L253.0 457.8M252.9 449.3L258.0 457.8M258.0 457.8L253.0 466.9M253.0 457.8L258.3 466.9M258.3 466.9L253.2 476.0M253.0 466.9L258.7 476.0M258.7 476.0L253.5 486.0M253.2 476.0L259.3 486.0M259.3 486.0L253.9 495.8M253.5 486.0L260.1 495.8M260.1 495.8L254.3 506.3M253.9 495.8L261.0 506.3M261.0 506.3L254.7 517.0M254.3 506.3L261.9 517.0M261.9 517.0L255.1 528.2M254.7 517.0L262.8 528.2M262.8 528.2L255.5 539.4M255.1 528.2L263.8 539.4M263.8 539.4L255.6 546.0M255.5 539.4L264.0 546.0M264.0 546.0L255.7 555.2M255.6 546.0L264.3 555.2M264.3 555.2L255.7 565.0M255.7 555.2L264.6 565.0M264.6 565.0L255.8 575.7M255.7 565.0L264.8 575.7M264.8 575.7L255.7 586.9M255.8 575.7L265.0 586.9M265.0 586.9L255.7 598.8M255.7 586.9L265.2 598.8M265.2 598.8L255.6 611.3M255.7 598.8L265.3 611.3M265.3 611.3L255.7 624.5M255.6 611.3L265.8 624.5M265.8 624.5L255.8 638.4M255.7 624.5L266.2 638.4M266.2 638.4L255.6 653.0M255.8 638.4L266.7 653.0M266.7 653.0L255.6 659.0M255.6 653.0L267.1 659.0" stroke="#5a321c" stroke-width="1.250" fill="none"/>
<path d="M239.2 418.0H252.6M238.8 424.6H252.6M238.2 433.1H252.6M237.7 440.8H252.6M237.1 449.3H252.6M236.5 457.8H252.6M235.9 466.9H252.6M235.4 476.0H252.6M234.9 486.0H252.6M234.4 495.8H252.6M233.9 506.3H252.6M233.3 517.0H252.6M232.6 528.2H252.6M232.0 539.4H252.6M231.4 546.0H252.6M230.6 555.2H252.6M229.6 565.0H252.6M228.6 575.7H252.6M227.5 586.9H252.6M226.3 598.8H252.6M225.0 611.3H252.6M223.2 624.5H252.6M221.1 638.4H252.6M218.2 653.0H252.6" stroke="#3a2216" stroke-width="1.300" fill="none"/>
<path d="M252.6 418.0H263.6M252.6 424.6H264.1M252.6 433.1H264.8M252.6 440.8H265.5M252.6 449.3H266.1M252.6 457.8H266.7M252.6 466.9H267.4M252.6 476.0H268.1M252.6 486.0H268.9M252.6 495.8H269.7M252.6 506.3H270.4M252.6 517.0H271.2M252.6 528.2H272.0M252.6 539.4H272.8M252.6 546.0H273.4M252.6 555.2H274.4M252.6 565.0H275.4M252.6 575.7H276.5M252.6 586.9H277.7M252.6 598.8H278.8M252.6 611.3H280.1M252.6 624.5H282.1M252.6 638.4H284.4M252.6 653.0H286.9" stroke="#6e3c1e" stroke-width="1.300" fill="none"/>
<polyline points="239.2,418.0 238.9,422.0 238.7,426.0 238.4,430.0 238.2,434.0 237.9,438.0 237.7,442.0 237.4,446.0 237.1,450.0 236.8,454.0 236.5,458.0 236.2,462.0 235.9,466.0 235.7,470.0 235.5,474.0 235.3,478.0 235.1,482.0 234.9,486.0 234.7,490.0 234.5,494.0 234.3,498.0 234.1,502.0 233.9,506.0 233.6,510.0 233.4,514.0 233.2,518.0 233.0,522.0 232.8,526.0 232.6,530.0 232.3,534.0 232.1,538.0 231.8,542.0 231.4,546.0 231.1,550.0 230.7,554.0 230.3,558.0 229.9,562.0 229.5,566.0 229.1,570.0 228.8,574.0 228.4,578.0 228.0,582.0 227.6,586.0 227.2,590.0 226.8,594.0 226.4,598.0 226.0,602.0 225.6,606.0 225.2,610.0 224.7,614.0 224.1,618.0 223.6,622.0 223.0,626.0 222.5,630.0 221.8,634.0 221.1,638.0 220.5,642.0 219.7,646.0 218.9,650.0 218.0,654.0 217.2,658.0 217.0,659.0" stroke="#38211a" stroke-width="2.0" fill="none"/>
<polyline points="245.9,418.0 245.8,422.0 245.7,426.0 245.7,430.0 245.6,434.0 245.5,438.0 245.4,442.0 245.2,446.0 245.1,450.0 245.0,454.0 244.8,458.0 244.7,462.0 244.6,466.0 244.5,470.0 244.5,474.0 244.4,478.0 244.3,482.0 244.1,486.0 243.9,490.0 243.6,494.0 243.4,498.0 243.2,502.0 242.9,506.0 242.7,510.0 242.4,514.0 242.1,518.0 241.8,522.0 241.6,526.0 241.3,530.0 241.0,534.0 240.7,538.0 240.4,542.0 240.2,546.0 240.0,550.0 239.7,554.0 239.5,558.0 239.2,562.0 239.0,566.0 238.7,570.0 238.5,574.0 238.2,578.0 238.0,582.0 237.7,586.0 237.4,590.0 237.1,594.0 236.8,598.0 236.6,602.0 236.3,606.0 236.0,610.0 235.6,614.0 235.3,618.0 234.9,622.0 234.6,626.0 234.2,630.0 233.8,634.0 233.3,638.0 232.8,642.0 232.3,646.0 231.7,650.0 231.2,654.0 230.6,658.0 230.5,659.0" stroke="#38211a" stroke-width="1.6" fill="none"/>
<polyline points="263.6,418.0 263.9,422.0 264.3,426.0 264.6,430.0 264.9,434.0 265.2,438.0 265.5,442.0 265.8,446.0 266.1,450.0 266.4,454.0 266.7,458.0 267.0,462.0 267.3,466.0 267.6,470.0 267.9,474.0 268.2,478.0 268.6,482.0 268.9,486.0 269.2,490.0 269.5,494.0 269.8,498.0 270.1,502.0 270.4,506.0 270.7,510.0 271.0,514.0 271.3,518.0 271.5,522.0 271.8,526.0 272.1,530.0 272.4,534.0 272.7,538.0 273.0,542.0 273.4,546.0 273.9,550.0 274.3,554.0 274.7,558.0 275.1,562.0 275.5,566.0 275.9,570.0 276.4,574.0 276.8,578.0 277.2,582.0 277.6,586.0 278.0,590.0 278.4,594.0 278.7,598.0 279.1,602.0 279.5,606.0 279.9,610.0 280.5,614.0 281.1,618.0 281.8,622.0 282.4,626.0 283.0,630.0 283.7,634.0 284.4,638.0 285.0,642.0 285.7,646.0 286.4,650.0 287.1,654.0 287.8,658.0 288.0,659.0" stroke="#6a381c" stroke-width="2.0" fill="none"/>
<polyline points="256.6,418.0 256.7,422.0 256.9,426.0 257.1,430.0 257.2,434.0 257.4,438.0 257.5,442.0 257.6,446.0 257.8,450.0 257.9,454.0 258.0,458.0 258.1,462.0 258.3,466.0 258.4,470.0 258.6,474.0 258.8,478.0 259.0,482.0 259.3,486.0 259.7,490.0 260.0,494.0 260.3,498.0 260.7,502.0 261.0,506.0 261.3,510.0 261.6,514.0 261.9,518.0 262.3,522.0 262.6,526.0 263.0,530.0 263.3,534.0 263.6,538.0 263.9,542.0 264.0,546.0 264.1,550.0 264.3,554.0 264.4,558.0 264.5,562.0 264.6,566.0 264.7,570.0 264.8,574.0 264.9,578.0 265.0,582.0 265.0,586.0 265.1,590.0 265.1,594.0 265.2,598.0 265.2,602.0 265.2,606.0 265.3,610.0 265.4,614.0 265.6,618.0 265.7,622.0 265.8,626.0 266.0,630.0 266.1,634.0 266.2,638.0 266.3,642.0 266.4,646.0 266.5,650.0 266.7,654.0 267.0,658.0 267.1,659.0" stroke="#8a4c24" stroke-width="1.4" fill="none"/>
<polyline points="246.7,502.0 246.9,506.0 247.1,510.0 247.3,514.0 247.5,518.0 247.7,522.0 247.9,526.0 248.1,530.0 248.4,534.0 248.6,538.0 248.7,542.0 248.5,546.0 248.4,550.0 248.2,554.0 248.1,558.0 247.9,562.0 247.8,566.0 247.6,570.0 247.4,574.0 247.3,578.0 247.1,582.0 246.9,586.0 246.7,590.0 246.5,594.0 246.3,598.0 246.1,602.0 245.9,606.0 245.6,610.0 245.4,614.0 245.2,618.0 245.0,622.0 244.7,626.0 244.5,630.0 244.2,634.0 243.9,638.0 243.5,642.0 243.1,646.0 242.7,650.0 242.4,654.0 242.1,658.0 242.1,659.0" stroke="#2c1910" stroke-width="1.2" fill="none"/>
<polyline points="252.6,426.0 252.7,430.0 252.7,434.0 252.8,438.0 252.9,442.0 252.9,446.0 252.9,450.0 252.9,454.0 253.0,458.0 253.0,462.0 253.0,466.0 253.1,470.0 253.2,474.0 253.3,478.0 253.4,482.0 253.5,486.0 253.7,490.0 253.9,494.0 254.0,498.0 254.2,502.0 254.3,506.0 254.4,510.0 254.6,514.0 254.7,518.0 254.9,522.0 255.0,526.0 255.2,530.0 255.3,534.0 255.5,538.0 255.6,542.0 255.6,546.0 255.6,550.0 255.6,554.0 255.7,558.0 255.7,562.0 255.7,566.0 255.7,570.0 255.7,574.0 255.8,578.0 255.8,582.0 255.7,586.0 255.7,590.0 255.7,594.0 255.7,598.0 255.7,602.0 255.6,606.0 255.6,610.0 255.7,614.0 255.7,618.0 255.7,622.0 255.7,626.0 255.8,630.0 255.8,634.0 255.8,638.0 255.7,642.0 255.7,646.0 255.6,650.0 255.6,654.0 255.6,658.0 255.6,659.0" stroke="#b0642c" stroke-width="0.9" fill="none"/>
<polyline points="263.4,418.0 263.7,422.0 264.1,426.0 264.4,430.0 264.7,434.0 265.0,438.0 265.3,442.0 265.6,446.0 265.9,450.0 266.2,454.0 266.5,458.0 266.7,462.0 267.0,466.0 267.3,470.0 267.7,474.0 268.0,478.0 268.3,482.0 268.6,486.0 268.9,490.0 269.2,494.0 269.6,498.0 269.9,502.0 270.1,506.0 270.4,510.0 270.7,514.0 271.0,518.0 271.2,522.0 271.5,526.0 271.8,530.0 272.1,534.0 272.3,538.0 272.7,542.0 273.1,546.0 273.5,550.0 273.9,554.0 274.3,558.0 274.7,562.0 275.2,566.0 275.6,570.0 276.0,574.0 276.4,578.0 276.8,582.0 277.2,586.0 277.6,590.0 277.9,594.0 278.3,598.0 278.7,602.0 279.1,606.0 279.5,610.0 280.1,614.0 280.7,618.0 281.3,622.0 281.9,626.0 282.5,630.0 283.2,634.0 283.8,638.0 284.5,642.0 285.2,646.0 285.9,650.0 286.6,654.0 287.3,658.0 287.4,659.0" stroke="#e08a40" stroke-width="0.7" fill="none"/>
<rect x="239.800" y="530" width="23" height="7" fill="#3a2418" fill-opacity=".8"/>
<path d="M236 642h34l13 17h-59z" fill="#2e1c16" fill-opacity=".72"/>
<path d="M253.200 643h17l12 16h-29z" fill="#5e3420" fill-opacity=".75"/>
<path d="M213 657.600h81" stroke="#3a2a22" stroke-width="2" stroke-dasharray="1.200 1"/>
<rect x="210.2" y="659.0" width="85.6" height="5.6" fill="#35241c"/>
<rect x="253.2" y="659.6" width="42.6" height="4.2" fill="#d4843e"/>
<path d="M212.500 664.600h40.700v6.600h-41.600z" fill="#45291b" fill-opacity=".9"/>
<path d="M253.200 664.600h40.300l.9 6.600h-41.200z" fill="#a65a2a" fill-opacity=".92"/>
<path d="M211.600 671.200h41.600v10.400h-43z" fill="#45291b" fill-opacity=".5"/>
<path d="M253.200 671.200h41.200l1.500 10.400h-42.700z" fill="#a65a2a" fill-opacity=".55"/>
<path d="M210.200 681.600h43v6.400h-43.800z" fill="#3e261a" fill-opacity=".95"/>
<path d="M213 668h80" stroke="#20120c" stroke-width="3.600" stroke-dasharray="1.600 1.800" stroke-opacity=".6"/>
<path d="M212.0 672L222.4 681M222.4 672L212.0 681M212.0 671.500V681.500M222.4 672L232.8 681M232.8 672L222.4 681M222.4 671.500V681.500M232.8 672L243.2 681M243.2 672L232.8 681M232.8 671.500V681.500M243.2 672L253.6 681M253.6 672L243.2 681M243.2 671.500V681.500" stroke="#2a1810" stroke-width="1.700" fill="none"/>
<path d="M253.6 672L264.0 681M264.0 672L253.6 681M253.6 671.500V681.500M264.0 672L274.4 681M274.4 672L264.0 681M264.0 671.500V681.500M274.4 672L284.8 681M284.8 672L274.4 681M274.4 671.500V681.500M284.8 672L295.2 681M295.2 672L284.8 681M284.8 671.500V681.500" stroke="#6a3a1c" stroke-width="1.700" fill="none"/>
<path d="M212 671h41M211 681.800h42M210.500 686h42.500" stroke="#24150e" stroke-opacity=".8" stroke-width="1.600"/>
<path d="M253.200 671h41M253.200 681.800h42.500" stroke="#e0934e" stroke-opacity=".9" stroke-width="1.300"/>
<rect x="253.2" y="682.4" width="43.4" height="5.2" fill="#c87a3a"/>
<path d="M255 685.300h41" stroke="#5a3018" stroke-width="1.400" stroke-dasharray="1 2.200"/>
<polygon points="210.0,688.0 238.0,688.0 224.5,748.0 184.0,748.0" fill="#3c2418" fill-opacity="0.42"/>
<polygon points="239.0,688.0 253.0,688.0 253.0,748.0 235.5,748.0" fill="#38221a" fill-opacity="0.5"/>
<polygon points="253.0,688.0 268.6,688.0 271.5,748.0 253.0,748.0" fill="#a85e2a" fill-opacity="0.7"/>
<polygon points="271.0,688.0 296.8,688.0 320.0,748.0 284.5,748.0" fill="#54301e" fill-opacity="0.48"/>
<path d="M210.0 688.0L221.8 694.7M224.0 688.0L207.1 694.7M224.0 688.0L236.5 694.7M238.0 688.0L221.8 694.7M210.0 688.0L238.0 688.0M207.1 694.7L219.6 701.3M221.8 694.7L204.2 701.3M221.8 694.7L235.0 701.3M236.5 694.7L219.6 701.3M207.1 694.7L236.5 694.7M204.2 701.3L217.4 708.0M219.6 701.3L201.3 708.0M219.6 701.3L233.5 708.0M235.0 701.3L217.4 708.0M204.2 701.3L235.0 701.3M201.3 708.0L215.2 714.7M217.4 708.0L198.4 714.7M217.4 708.0L232.0 714.7M233.5 708.0L215.2 714.7M201.3 708.0L233.5 708.0M198.4 714.7L213.0 721.3M215.2 714.7L195.6 721.3M215.2 714.7L230.5 721.3M232.0 714.7L213.0 721.3M198.4 714.7L232.0 714.7M195.6 721.3L210.8 728.0M213.0 721.3L192.7 728.0M213.0 721.3L229.0 728.0M230.5 721.3L210.8 728.0M195.6 721.3L230.5 721.3M192.7 728.0L208.6 734.7M210.8 728.0L189.8 734.7M210.8 728.0L227.5 734.7M229.0 728.0L208.6 734.7M192.7 728.0L229.0 728.0M189.8 734.7L206.4 741.3M208.6 734.7L186.9 741.3M208.6 734.7L226.0 741.3M227.5 734.7L206.4 741.3M189.8 734.7L227.5 734.7M186.9 741.3L204.2 748.0M206.4 741.3L184.0 748.0M206.4 741.3L224.5 748.0M226.0 741.3L204.2 748.0M186.9 741.3L226.0 741.3M210.0 688.0L184.0 748.0M224.0 688.0L204.2 748.0M238.0 688.0L224.5 748.0" stroke="#2c1a12" stroke-width="1.5" fill="none"/>
<path d="M239.0 688.0L245.8 694.7M246.0 688.0L238.6 694.7M246.0 688.0L253.0 694.7M253.0 688.0L245.8 694.7M239.0 688.0L253.0 688.0M238.6 694.7L245.6 701.3M245.8 694.7L238.2 701.3M245.8 694.7L253.0 701.3M253.0 694.7L245.6 701.3M238.6 694.7L253.0 694.7M238.2 701.3L245.4 708.0M245.6 701.3L237.8 708.0M245.6 701.3L253.0 708.0M253.0 701.3L245.4 708.0M238.2 701.3L253.0 701.3M237.8 708.0L245.2 714.7M245.4 708.0L237.4 714.7M245.4 708.0L253.0 714.7M253.0 708.0L245.2 714.7M237.8 708.0L253.0 708.0M237.4 714.7L245.0 721.3M245.2 714.7L237.1 721.3M245.2 714.7L253.0 721.3M253.0 714.7L245.0 721.3M237.4 714.7L253.0 714.7M237.1 721.3L244.8 728.0M245.0 721.3L236.7 728.0M245.0 721.3L253.0 728.0M253.0 721.3L244.8 728.0M237.1 721.3L253.0 721.3M236.7 728.0L244.6 734.7M244.8 728.0L236.3 734.7M244.8 728.0L253.0 734.7M253.0 728.0L244.6 734.7M236.7 728.0L253.0 728.0M236.3 734.7L244.4 741.3M244.6 734.7L235.9 741.3M244.6 734.7L253.0 741.3M253.0 734.7L244.4 741.3M236.3 734.7L253.0 734.7M235.9 741.3L244.2 748.0M244.4 741.3L235.5 748.0M244.4 741.3L253.0 748.0M253.0 741.3L244.2 748.0M235.9 741.3L253.0 741.3M239.0 688.0L235.5 748.0M246.0 688.0L244.2 748.0M253.0 688.0L253.0 748.0" stroke="#2c1a12" stroke-width="1.35" fill="none"/>
<path d="M253.0 688.0L261.0 694.7M260.8 688.0L253.0 694.7M260.8 688.0L268.9 694.7M268.6 688.0L261.0 694.7M253.0 688.0L268.6 688.0M253.0 694.7L261.1 701.3M261.0 694.7L253.0 701.3M261.0 694.7L269.2 701.3M268.9 694.7L261.1 701.3M253.0 694.7L268.9 694.7M253.0 701.3L261.3 708.0M261.1 701.3L253.0 708.0M261.1 701.3L269.6 708.0M269.2 701.3L261.3 708.0M253.0 701.3L269.2 701.3M253.0 708.0L261.4 714.7M261.3 708.0L253.0 714.7M261.3 708.0L269.9 714.7M269.6 708.0L261.4 714.7M253.0 708.0L269.6 708.0M253.0 714.7L261.6 721.3M261.4 714.7L253.0 721.3M261.4 714.7L270.2 721.3M269.9 714.7L261.6 721.3M253.0 714.7L269.9 714.7M253.0 721.3L261.8 728.0M261.6 721.3L253.0 728.0M261.6 721.3L270.5 728.0M270.2 721.3L261.8 728.0M253.0 721.3L270.2 721.3M253.0 728.0L261.9 734.7M261.8 728.0L253.0 734.7M261.8 728.0L270.9 734.7M270.5 728.0L261.9 734.7M253.0 728.0L270.5 728.0M253.0 734.7L262.1 741.3M261.9 734.7L253.0 741.3M261.9 734.7L271.2 741.3M270.9 734.7L262.1 741.3M253.0 734.7L270.9 734.7M253.0 741.3L262.2 748.0M262.1 741.3L253.0 748.0M262.1 741.3L271.5 748.0M271.2 741.3L262.2 748.0M253.0 741.3L271.2 741.3M253.0 688.0L253.0 748.0M260.8 688.0L262.2 748.0M268.6 688.0L271.5 748.0" stroke="#5a3018" stroke-width="1.3" fill="none"/>
<path d="M271.0 688.0L285.9 694.7M283.9 688.0L272.5 694.7M283.9 688.0L299.4 694.7M296.8 688.0L285.9 694.7M271.0 688.0L296.8 688.0M272.5 694.7L288.0 701.3M285.9 694.7L274.0 701.3M285.9 694.7L302.0 701.3M299.4 694.7L288.0 701.3M272.5 694.7L299.4 694.7M274.0 701.3L290.0 708.0M288.0 701.3L275.5 708.0M288.0 701.3L304.5 708.0M302.0 701.3L290.0 708.0M274.0 701.3L302.0 701.3M275.5 708.0L292.1 714.7M290.0 708.0L277.0 714.7M290.0 708.0L307.1 714.7M304.5 708.0L292.1 714.7M275.5 708.0L304.5 708.0M277.0 714.7L294.1 721.3M292.1 714.7L278.5 721.3M292.1 714.7L309.7 721.3M307.1 714.7L294.1 721.3M277.0 714.7L307.1 714.7M278.5 721.3L296.1 728.0M294.1 721.3L280.0 728.0M294.1 721.3L312.3 728.0M309.7 721.3L296.1 728.0M278.5 721.3L309.7 721.3M280.0 728.0L298.2 734.7M296.1 728.0L281.5 734.7M296.1 728.0L314.8 734.7M312.3 728.0L298.2 734.7M280.0 728.0L312.3 728.0M281.5 734.7L300.2 741.3M298.2 734.7L283.0 741.3M298.2 734.7L317.4 741.3M314.8 734.7L300.2 741.3M281.5 734.7L314.8 734.7M283.0 741.3L302.2 748.0M300.2 741.3L284.5 748.0M300.2 741.3L320.0 748.0M317.4 741.3L302.2 748.0M283.0 741.3L317.4 741.3M271.0 688.0L284.5 748.0M283.9 688.0L302.2 748.0M296.8 688.0L320.0 748.0" stroke="#3a2014" stroke-width="1.5" fill="none"/>
<path d="M296.800 688L320 748M271 688L284.500 748" stroke="#d8843c" stroke-width="1.300" fill="none"/>
<path d="M283.900 688L302.250 748" stroke="#b0642c" stroke-width="1.100" fill="none"/>
<path d="M253.2 659V812" stroke="#d07832" stroke-width="1.500"/>
<rect x="204.5" y="743.6" width="29.0" height="5.0" fill="#2a1a14"/>
<rect x="183.6" y="748.4" width="140.4" height="7.2" fill="#33211a"/>
<rect x="253.2" y="749.2" width="71.0" height="5.4" fill="#9a5a2c"/>
<path d="M185 752h68" stroke="#5a4030" stroke-width="2" stroke-dasharray="1.400 2"/>
<path d="M254 752h69" stroke="#4a2814" stroke-width="2.600" stroke-dasharray="1.600 2" stroke-opacity=".8"/>
<rect x="172.3" y="755.5" width="161.7" height="5.5" fill="#3a261c"/>
<rect x="253.2" y="755.8" width="81.0" height="4.8" fill="#c87a38"/>
<path d="M173.500 761h160l1.500 7H172z" fill="#2e1c14"/>
<path d="M253.200 761h80.300l1.500 7h-81.800z" fill="#5a3018"/>
<path d="M254 764.500h80" stroke="#d8883e" stroke-width="6" stroke-dasharray="1.500 3"/>
<path d="M173 764.500h80" stroke="#5a4032" stroke-width="6" stroke-dasharray="1.300 3.200"/>
<path d="M172 768h163l3.500 13H167.500z" fill="#432a1e" fill-opacity=".93"/>
<path d="M253.200 768H335l3.500 13h-85.300z" fill="#a8602c" fill-opacity=".95"/>
<path d="M170.0 769.500l5 9M175.0 769.500l-5 9M175.6 769.500l5 9M180.6 769.500l-5 9M181.2 769.500l5 9M186.2 769.500l-5 9M186.8 769.500l5 9M191.8 769.500l-5 9M192.4 769.500l5 9M197.4 769.500l-5 9M198.0 769.500l5 9M203.0 769.500l-5 9M203.6 769.500l5 9M208.6 769.500l-5 9M209.2 769.500l5 9M214.2 769.500l-5 9M214.8 769.500l5 9M219.8 769.500l-5 9M220.4 769.500l5 9M225.4 769.500l-5 9M226.0 769.500l5 9M231.0 769.500l-5 9M231.6 769.500l5 9M236.6 769.500l-5 9M237.2 769.500l5 9M242.2 769.500l-5 9M242.8 769.500l5 9M247.8 769.500l-5 9M248.4 769.500l5 9M253.4 769.500l-5 9M254.0 769.500l5 9M259.0 769.500l-5 9M259.6 769.500l5 9M264.6 769.500l-5 9M265.2 769.500l5 9M270.2 769.500l-5 9M270.8 769.500l5 9M275.8 769.500l-5 9M276.4 769.500l5 9M281.4 769.500l-5 9M282.0 769.500l5 9M287.0 769.500l-5 9M287.6 769.500l5 9M292.6 769.500l-5 9M293.2 769.500l5 9M298.2 769.500l-5 9M298.8 769.500l5 9M303.8 769.500l-5 9M304.4 769.500l5 9M309.4 769.500l-5 9M310.0 769.500l5 9M315.0 769.500l-5 9M315.6 769.500l5 9M320.6 769.500l-5 9M321.2 769.500l5 9M326.2 769.500l-5 9M326.8 769.500l5 9M331.8 769.500l-5 9M332.4 769.500l5 9M337.4 769.500l-5 9" stroke="#20130c" stroke-width="1.500" stroke-opacity=".55" fill="none"/>
<path d="M253.200 768.600h82M253.200 780h85" stroke="#e8a05c" stroke-width="1.100" stroke-opacity=".85"/>
<path d="M168 780h85" stroke="#24160e" stroke-width="1.600" stroke-opacity=".7"/>
<path d="M167.500 781h86v31h-17C233 798 226 788.500 211 788.500S176 796 169.500 811H152z" fill="#40271b" fill-opacity=".93"/>
<path d="M253.200 781h85.300l27.500 30h-15C343 796 319 788.500 304 788.500S278 798 275 812h-21.800z" fill="#a05a2a" fill-opacity=".95"/>
<path d="M163 811C170 794 194 782.800 211 782.500S235 794 238.500 811" fill="none" stroke="#6a4630" stroke-width="1.100"/>
<path d="M272.500 811C276 794 288 782.800 304 782.500S347 794 356 811" fill="none" stroke="#e8a058" stroke-width="1.200"/>
<path d="M169.500 811C176 796 196 788.500 211 788.500S233 798 236 812" fill="none" stroke="#1e120c" stroke-width="1.600" stroke-opacity=".75"/>
<path d="M275 812C278 798 289 788.500 304 788.500S343 796 351 811" fill="none" stroke="#5a3018" stroke-width="1.600" stroke-opacity=".85"/>
<path d="M166.500 811C173 795 195 785.600 211 785.500S234 796 237.500 811" fill="none" stroke="#1e120c" stroke-width="3" stroke-dasharray="1.500 2" stroke-opacity=".5"/>
<path d="M273.800 811C277 796 288.500 785.600 304 785.500S345 795 353.500 811" fill="none" stroke="#4a2814" stroke-width="3" stroke-dasharray="1.500 2" stroke-opacity=".6"/>
<path d="M238 783l15 13-15 13M253 783l-15 13 15 13" fill="none" stroke="#1e120c" stroke-width="1.400" stroke-opacity=".6"/>
<path d="M256 783l17 13-17 13M273 783l-17 13 17 13M256 796h17" fill="none" stroke="#5a3018" stroke-width="1.400" stroke-opacity=".8"/>
<path d="M340 783l16 20M346 783l-8 10 16 16" fill="none" stroke="#5a3018" stroke-width="1.300" stroke-opacity=".7"/>
<path d="M166 783l-11 22M160 795l8 10" fill="none" stroke="#1e120c" stroke-width="1.300" stroke-opacity=".5"/>
</g>
</g>
</svg>
<!--PHOTO_END-->
<svg id="s-status" width="719" height="994" viewBox="0 0 719 994" style="pointer-events:none">
<rect x="454" y="971" width="38.500" height="20.500" fill="#c8c6c4"/>
<g fill="#444" font-size="12.300">
<text x="8.300" y="986" textLength="55.500" lengthAdjust="spacingAndGlyphs">Page 1 of 1</text>
<text x="85" y="985.500" textLength="40" lengthAdjust="spacingAndGlyphs">0 words</text>
<text x="177.500" y="985.300" textLength="115" lengthAdjust="spacingAndGlyphs">English (United States)</text>
<text x="371.500" y="985.500" textLength="29" lengthAdjust="spacingAndGlyphs">Focus</text>
<text x="678.200" y="985" textLength="20.500" lengthAdjust="spacingAndGlyphs">70%</text>
</g>
<!-- proofing book -->
<g fill="none" stroke="#444" stroke-width="1.100">
<path d="M151.800 976.500v7.500M151.800 976.500c-2-.8-4-.8-6 0v7.800c2-.8 4-.8 6 0M151.800 976.500c2-.8 4-.8 6 0v5"/>
<path d="M152.600 984.200l2 2.200 3.800-4.400"/>
</g>
<!-- focus -->
<g fill="none" stroke="#444" stroke-width="1.100">
<path d="M354.300 977.500v-2.500h2.500M354.300 984v2.500h2.500M367.500 984v2.500h-2.500"/>
<path d="M358.500 976.500h4.500l3 3v5.500h-7.500z"/>
<path d="M363 976.500v3h3"/>
</g>
<!-- read mode -->
<g fill="none" stroke="#444" stroke-width="1">
<path d="M432.800 976.300v9.200M432.800 976.300c-2-1-4-1-6 0v9.200c2-1 4-1 6 0c2-1 4-1 6 0v-9.200c-2-1-4-1-6 0"/>
<path d="M428.300 978.200h3M428.300 980.200h3M428.300 982.200h3M434.300 978.200h3M434.300 980.200h3M434.300 982.200h3"/>
</g>
<!-- print layout -->
<g fill="none" stroke="#333" stroke-width="1.100">
<rect x="467.500" y="975" width="10.500" height="12"/>
<path d="M469.500 977.500h6.500M469.500 979.700h6.500M469.500 981.900h6.500M469.500 984.100h6.500"/>
</g>
<!-- web layout -->
<g fill="none" stroke="#444" stroke-width="1.100">
<path d="M512 986.500h-5v-12h10.500v5"/>
<path d="M508.800 977h7M508.800 979.400h5M508.800 981.800h3.500"/>
<circle cx="516.500" cy="983.500" r="3.700" fill="#f3f2f1"/>
<path d="M512.800 983.500h7.400M516.500 979.800v7.400" stroke-width=".8"/>
</g>
<!-- zoom slider -->
<g stroke="#444" stroke-width="1.100" fill="none">
<path d="M539.600 980.800h7.600M552.400 980.800h99.400M656.900 980.800h7.600M660.700 977v7.600M602.700 978.300v5.600"/>
</g>
<rect x="584.400" y="975.800" width="4.600" height="11" fill="#333"/>
</svg>

<!--STATUS_END-->
</body>
</html>
